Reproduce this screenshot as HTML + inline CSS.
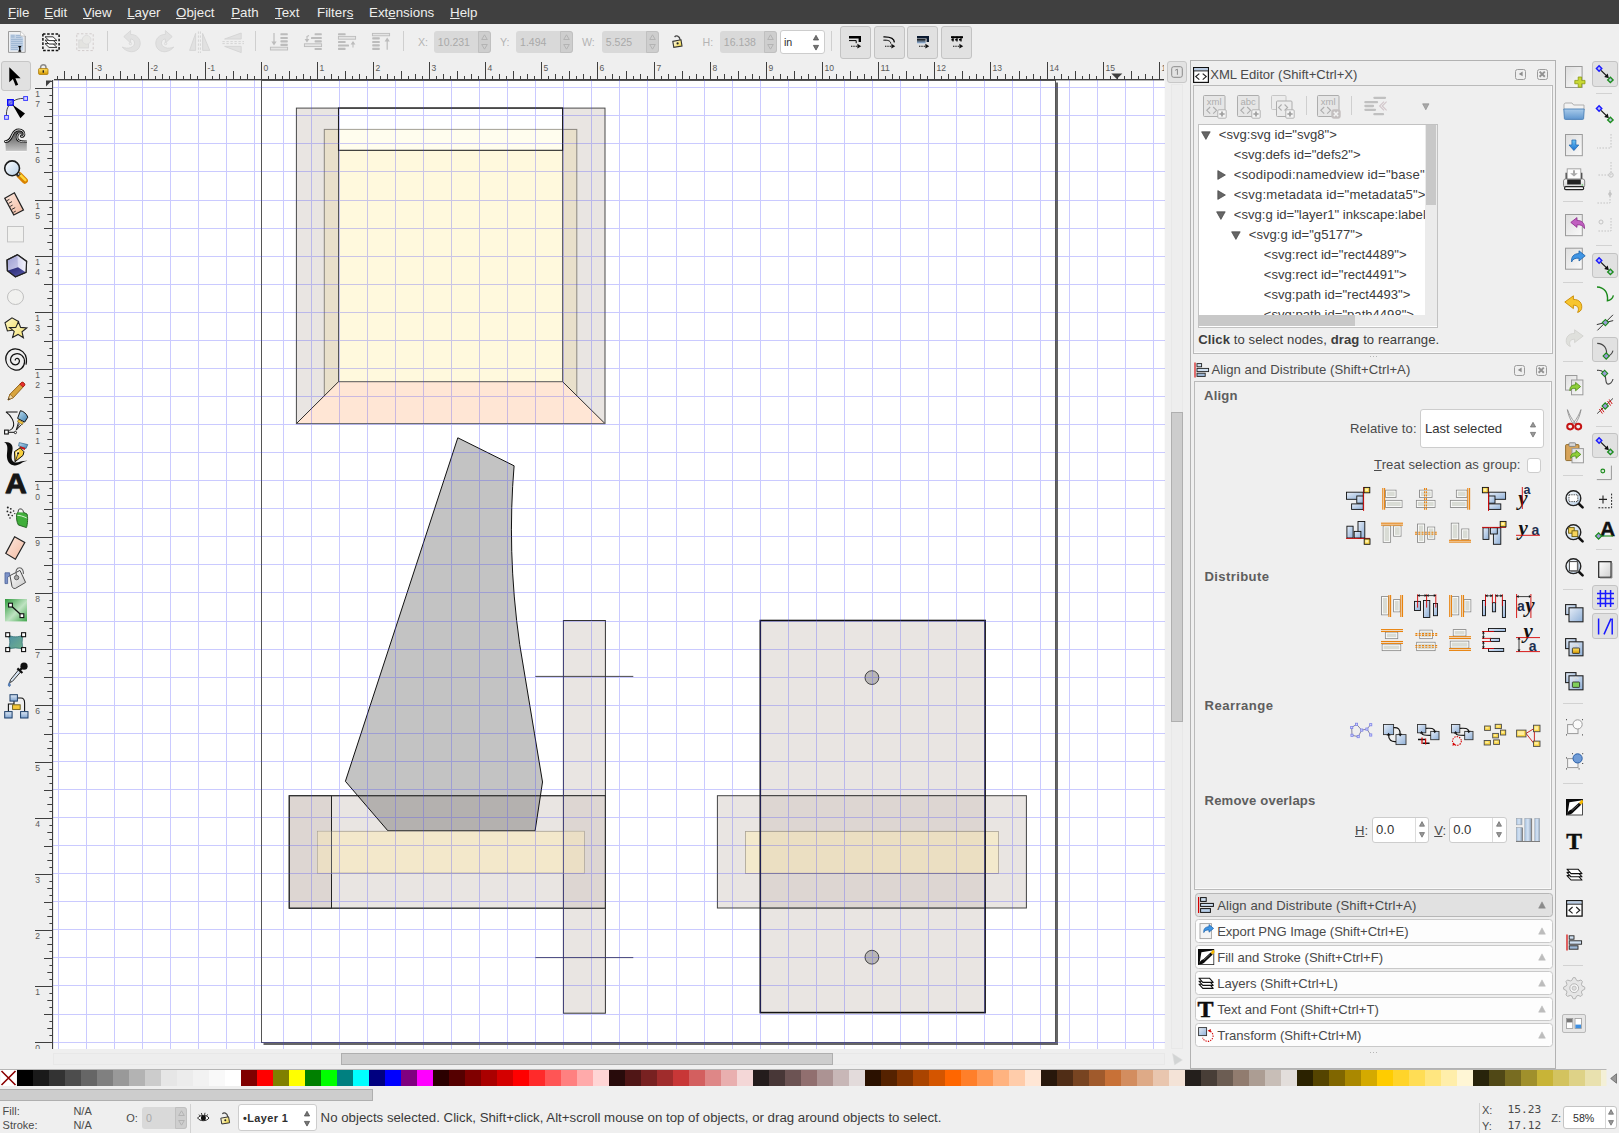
<!DOCTYPE html>
<html lang="en"><head><meta charset="utf-8"><title>Inkscape</title>
<style>
html,body{margin:0;padding:0;}
body{width:1619px;height:1133px;overflow:hidden;background:#efefef;font-family:"Liberation Sans",sans-serif;font-size:13.1px;color:#3a3a3a;}
#root{position:relative;width:1619px;height:1133px;overflow:hidden;background:#efefef;}
#root div,#root svg{position:absolute;box-sizing:border-box;}
#root svg{overflow:visible;}
.t{white-space:nowrap;line-height:16px;height:16px;}
.b{font-weight:bold;}
u{text-decoration:underline;text-underline-offset:1px;}
</style></head>
<body><div id="root">
<div style="left:0px;top:0px;width:1619px;height:24px;background:#404040;"></div>
<div class="t" style="left:8px;top:4.7px;color:#eeeeec;font-size:13.33px;"><u>F</u>ile</div>
<div class="t" style="left:44.3px;top:4.7px;color:#eeeeec;font-size:13.33px;"><u>E</u>dit</div>
<div class="t" style="left:83px;top:4.7px;color:#eeeeec;font-size:13.33px;"><u>V</u>iew</div>
<div class="t" style="left:127.2px;top:4.7px;color:#eeeeec;font-size:13.33px;"><u>L</u>ayer</div>
<div class="t" style="left:176px;top:4.7px;color:#eeeeec;font-size:13.33px;"><u>O</u>bject</div>
<div class="t" style="left:231.2px;top:4.7px;color:#eeeeec;font-size:13.33px;"><u>P</u>ath</div>
<div class="t" style="left:275px;top:4.7px;color:#eeeeec;font-size:13.33px;"><u>T</u>ext</div>
<div class="t" style="left:317px;top:4.7px;color:#eeeeec;font-size:13.33px;">Filter<u>s</u></div>
<div class="t" style="left:369px;top:4.7px;color:#eeeeec;font-size:13.33px;">Ext<u>e</u>nsions</div>
<div class="t" style="left:450px;top:4.7px;color:#eeeeec;font-size:13.33px;"><u>H</u>elp</div>
<div style="left:107px;top:31px;width:1px;height:20px;background:#cfcfcf;"></div>
<div style="left:255px;top:31px;width:1px;height:20px;background:#cfcfcf;"></div>
<div style="left:403px;top:31px;width:1px;height:20px;background:#cfcfcf;"></div>
<div style="left:831px;top:31px;width:1px;height:20px;background:#cfcfcf;"></div>
<div class="t" style="left:418px;top:34px;color:#b4b4b4;font-size:10.67px;">X:</div>
<div style="left:434px;top:31px;width:56.5px;height:21.5px;background:#d9d9d9;border-radius:3px;"></div>
<div style="left:478.0px;top:30.5px;width:12.5px;height:22.5px;background:#cecece;border:1px solid #c0c0c0;border-radius:0 3px 3px 0;"></div>
<svg style="left:481.0px;top:34px;" width="7" height="16" viewBox="0 0 7 16"><path d="M0.7 5.5 L3.5 0.8 L6.3 5.5 Z M0.7 10.5 L3.5 15.2 L6.3 10.5 Z" fill="none" stroke="#b0b0b0" stroke-width="0.9"/></svg>
<div class="t" style="left:437.8px;top:34px;color:#a9a9a9;font-size:10.5px;">10.231</div>
<div class="t" style="left:500px;top:34px;color:#b4b4b4;font-size:10.67px;">Y:</div>
<div style="left:516.3px;top:31px;width:56.5px;height:21.5px;background:#d9d9d9;border-radius:3px;"></div>
<div style="left:560.3px;top:30.5px;width:12.5px;height:22.5px;background:#cecece;border:1px solid #c0c0c0;border-radius:0 3px 3px 0;"></div>
<svg style="left:563.3px;top:34px;" width="7" height="16" viewBox="0 0 7 16"><path d="M0.7 5.5 L3.5 0.8 L6.3 5.5 Z M0.7 10.5 L3.5 15.2 L6.3 10.5 Z" fill="none" stroke="#b0b0b0" stroke-width="0.9"/></svg>
<div class="t" style="left:520.0999999999999px;top:34px;color:#a9a9a9;font-size:10.5px;">1.494</div>
<div class="t" style="left:582px;top:34px;color:#b4b4b4;font-size:10.67px;">W:</div>
<div style="left:602px;top:31px;width:56.5px;height:21.5px;background:#d9d9d9;border-radius:3px;"></div>
<div style="left:646.0px;top:30.5px;width:12.5px;height:22.5px;background:#cecece;border:1px solid #c0c0c0;border-radius:0 3px 3px 0;"></div>
<svg style="left:649.0px;top:34px;" width="7" height="16" viewBox="0 0 7 16"><path d="M0.7 5.5 L3.5 0.8 L6.3 5.5 Z M0.7 10.5 L3.5 15.2 L6.3 10.5 Z" fill="none" stroke="#b0b0b0" stroke-width="0.9"/></svg>
<div class="t" style="left:605.8px;top:34px;color:#a9a9a9;font-size:10.5px;">5.525</div>
<div class="t" style="left:702.5px;top:34px;color:#b4b4b4;font-size:10.67px;">H:</div>
<div style="left:720px;top:31px;width:56.5px;height:21.5px;background:#d9d9d9;border-radius:3px;"></div>
<div style="left:764.0px;top:30.5px;width:12.5px;height:22.5px;background:#cecece;border:1px solid #c0c0c0;border-radius:0 3px 3px 0;"></div>
<svg style="left:767.0px;top:34px;" width="7" height="16" viewBox="0 0 7 16"><path d="M0.7 5.5 L3.5 0.8 L6.3 5.5 Z M0.7 10.5 L3.5 15.2 L6.3 10.5 Z" fill="none" stroke="#b0b0b0" stroke-width="0.9"/></svg>
<div class="t" style="left:723.8px;top:34px;color:#a9a9a9;font-size:10.5px;">16.138</div>
<div style="left:780px;top:29.5px;width:44.5px;height:24px;background:#fff;border:1px solid #cdcdcd;border-radius:3px;"></div>
<div class="t" style="left:784px;top:34px;color:#2e2e2e;font-size:10.67px;">in</div>
<svg style="left:812.6px;top:35px;" width="6" height="15.4" viewBox="0 0 6 15.4"><path d="M0.4 5 L3 0.3 L5.6 5 Z M0.4 10.4 L3 15.1 L5.6 10.4 Z" fill="#777" stroke="#444" stroke-width="0.7"/></svg>
<div style="left:839.5px;top:25.5px;width:31px;height:33px;background:#e1e1e1;border:1px solid #c3c3c3;border-radius:3px;"></div>
<div style="left:873.5px;top:25.5px;width:31px;height:33px;background:#e1e1e1;border:1px solid #c3c3c3;border-radius:3px;"></div>
<div style="left:907.3px;top:25.5px;width:31px;height:33px;background:#e1e1e1;border:1px solid #c3c3c3;border-radius:3px;"></div>
<div style="left:941.3px;top:25.5px;width:31px;height:33px;background:#e1e1e1;border:1px solid #c3c3c3;border-radius:3px;"></div>
<svg style="left:54px;top:62px;overflow:hidden" width="1110" height="19" viewBox="0 0 1110 19" font-family="Liberation Sans, sans-serif"><rect x="3" y="14" width="1" height="3" fill="#3e3e3e"/><rect x="10" y="9" width="1" height="8" fill="#3e3e3e"/><rect x="17" y="14" width="1" height="3" fill="#3e3e3e"/><rect x="24" y="12" width="1" height="5" fill="#3e3e3e"/><rect x="31" y="14" width="1" height="3" fill="#3e3e3e"/><rect x="38" y="0" width="1" height="17" fill="#3e3e3e"/><rect x="45" y="14" width="1" height="3" fill="#3e3e3e"/><rect x="52" y="12" width="1" height="5" fill="#3e3e3e"/><rect x="59" y="14" width="1" height="3" fill="#3e3e3e"/><rect x="66" y="9" width="1" height="8" fill="#3e3e3e"/><rect x="73" y="14" width="1" height="3" fill="#3e3e3e"/><rect x="80" y="12" width="1" height="5" fill="#3e3e3e"/><rect x="87" y="14" width="1" height="3" fill="#3e3e3e"/><rect x="94" y="0" width="1" height="17" fill="#3e3e3e"/><rect x="101" y="14" width="1" height="3" fill="#3e3e3e"/><rect x="108" y="12" width="1" height="5" fill="#3e3e3e"/><rect x="115" y="14" width="1" height="3" fill="#3e3e3e"/><rect x="122" y="9" width="1" height="8" fill="#3e3e3e"/><rect x="129" y="14" width="1" height="3" fill="#3e3e3e"/><rect x="136" y="12" width="1" height="5" fill="#3e3e3e"/><rect x="143" y="14" width="1" height="3" fill="#3e3e3e"/><rect x="151" y="0" width="1" height="17" fill="#3e3e3e"/><rect x="158" y="14" width="1" height="3" fill="#3e3e3e"/><rect x="165" y="12" width="1" height="5" fill="#3e3e3e"/><rect x="172" y="14" width="1" height="3" fill="#3e3e3e"/><rect x="179" y="9" width="1" height="8" fill="#3e3e3e"/><rect x="186" y="14" width="1" height="3" fill="#3e3e3e"/><rect x="193" y="12" width="1" height="5" fill="#3e3e3e"/><rect x="200" y="14" width="1" height="3" fill="#3e3e3e"/><rect x="207" y="0" width="1" height="17" fill="#3e3e3e"/><rect x="214" y="14" width="1" height="3" fill="#3e3e3e"/><rect x="221" y="12" width="1" height="5" fill="#3e3e3e"/><rect x="228" y="14" width="1" height="3" fill="#3e3e3e"/><rect x="235" y="9" width="1" height="8" fill="#3e3e3e"/><rect x="242" y="14" width="1" height="3" fill="#3e3e3e"/><rect x="249" y="12" width="1" height="5" fill="#3e3e3e"/><rect x="256" y="14" width="1" height="3" fill="#3e3e3e"/><rect x="263" y="0" width="1" height="17" fill="#3e3e3e"/><rect x="270" y="14" width="1" height="3" fill="#3e3e3e"/><rect x="277" y="12" width="1" height="5" fill="#3e3e3e"/><rect x="284" y="14" width="1" height="3" fill="#3e3e3e"/><rect x="291" y="9" width="1" height="8" fill="#3e3e3e"/><rect x="298" y="14" width="1" height="3" fill="#3e3e3e"/><rect x="305" y="12" width="1" height="5" fill="#3e3e3e"/><rect x="312" y="14" width="1" height="3" fill="#3e3e3e"/><rect x="319" y="0" width="1" height="17" fill="#3e3e3e"/><rect x="326" y="14" width="1" height="3" fill="#3e3e3e"/><rect x="333" y="12" width="1" height="5" fill="#3e3e3e"/><rect x="340" y="14" width="1" height="3" fill="#3e3e3e"/><rect x="347" y="9" width="1" height="8" fill="#3e3e3e"/><rect x="354" y="14" width="1" height="3" fill="#3e3e3e"/><rect x="361" y="12" width="1" height="5" fill="#3e3e3e"/><rect x="368" y="14" width="1" height="3" fill="#3e3e3e"/><rect x="375" y="0" width="1" height="17" fill="#3e3e3e"/><rect x="382" y="14" width="1" height="3" fill="#3e3e3e"/><rect x="389" y="12" width="1" height="5" fill="#3e3e3e"/><rect x="396" y="14" width="1" height="3" fill="#3e3e3e"/><rect x="403" y="9" width="1" height="8" fill="#3e3e3e"/><rect x="410" y="14" width="1" height="3" fill="#3e3e3e"/><rect x="417" y="12" width="1" height="5" fill="#3e3e3e"/><rect x="424" y="14" width="1" height="3" fill="#3e3e3e"/><rect x="431" y="0" width="1" height="17" fill="#3e3e3e"/><rect x="438" y="14" width="1" height="3" fill="#3e3e3e"/><rect x="445" y="12" width="1" height="5" fill="#3e3e3e"/><rect x="452" y="14" width="1" height="3" fill="#3e3e3e"/><rect x="459" y="9" width="1" height="8" fill="#3e3e3e"/><rect x="466" y="14" width="1" height="3" fill="#3e3e3e"/><rect x="473" y="12" width="1" height="5" fill="#3e3e3e"/><rect x="480" y="14" width="1" height="3" fill="#3e3e3e"/><rect x="487" y="0" width="1" height="17" fill="#3e3e3e"/><rect x="494" y="14" width="1" height="3" fill="#3e3e3e"/><rect x="501" y="12" width="1" height="5" fill="#3e3e3e"/><rect x="508" y="14" width="1" height="3" fill="#3e3e3e"/><rect x="515" y="9" width="1" height="8" fill="#3e3e3e"/><rect x="522" y="14" width="1" height="3" fill="#3e3e3e"/><rect x="529" y="12" width="1" height="5" fill="#3e3e3e"/><rect x="536" y="14" width="1" height="3" fill="#3e3e3e"/><rect x="543" y="0" width="1" height="17" fill="#3e3e3e"/><rect x="551" y="14" width="1" height="3" fill="#3e3e3e"/><rect x="558" y="12" width="1" height="5" fill="#3e3e3e"/><rect x="565" y="14" width="1" height="3" fill="#3e3e3e"/><rect x="572" y="9" width="1" height="8" fill="#3e3e3e"/><rect x="579" y="14" width="1" height="3" fill="#3e3e3e"/><rect x="586" y="12" width="1" height="5" fill="#3e3e3e"/><rect x="593" y="14" width="1" height="3" fill="#3e3e3e"/><rect x="600" y="0" width="1" height="17" fill="#3e3e3e"/><rect x="607" y="14" width="1" height="3" fill="#3e3e3e"/><rect x="614" y="12" width="1" height="5" fill="#3e3e3e"/><rect x="621" y="14" width="1" height="3" fill="#3e3e3e"/><rect x="628" y="9" width="1" height="8" fill="#3e3e3e"/><rect x="635" y="14" width="1" height="3" fill="#3e3e3e"/><rect x="642" y="12" width="1" height="5" fill="#3e3e3e"/><rect x="649" y="14" width="1" height="3" fill="#3e3e3e"/><rect x="656" y="0" width="1" height="17" fill="#3e3e3e"/><rect x="663" y="14" width="1" height="3" fill="#3e3e3e"/><rect x="670" y="12" width="1" height="5" fill="#3e3e3e"/><rect x="677" y="14" width="1" height="3" fill="#3e3e3e"/><rect x="684" y="9" width="1" height="8" fill="#3e3e3e"/><rect x="691" y="14" width="1" height="3" fill="#3e3e3e"/><rect x="698" y="12" width="1" height="5" fill="#3e3e3e"/><rect x="705" y="14" width="1" height="3" fill="#3e3e3e"/><rect x="712" y="0" width="1" height="17" fill="#3e3e3e"/><rect x="719" y="14" width="1" height="3" fill="#3e3e3e"/><rect x="726" y="12" width="1" height="5" fill="#3e3e3e"/><rect x="733" y="14" width="1" height="3" fill="#3e3e3e"/><rect x="740" y="9" width="1" height="8" fill="#3e3e3e"/><rect x="747" y="14" width="1" height="3" fill="#3e3e3e"/><rect x="754" y="12" width="1" height="5" fill="#3e3e3e"/><rect x="761" y="14" width="1" height="3" fill="#3e3e3e"/><rect x="768" y="0" width="1" height="17" fill="#3e3e3e"/><rect x="775" y="14" width="1" height="3" fill="#3e3e3e"/><rect x="782" y="12" width="1" height="5" fill="#3e3e3e"/><rect x="789" y="14" width="1" height="3" fill="#3e3e3e"/><rect x="796" y="9" width="1" height="8" fill="#3e3e3e"/><rect x="803" y="14" width="1" height="3" fill="#3e3e3e"/><rect x="810" y="12" width="1" height="5" fill="#3e3e3e"/><rect x="817" y="14" width="1" height="3" fill="#3e3e3e"/><rect x="824" y="0" width="1" height="17" fill="#3e3e3e"/><rect x="831" y="14" width="1" height="3" fill="#3e3e3e"/><rect x="838" y="12" width="1" height="5" fill="#3e3e3e"/><rect x="845" y="14" width="1" height="3" fill="#3e3e3e"/><rect x="852" y="9" width="1" height="8" fill="#3e3e3e"/><rect x="859" y="14" width="1" height="3" fill="#3e3e3e"/><rect x="866" y="12" width="1" height="5" fill="#3e3e3e"/><rect x="873" y="14" width="1" height="3" fill="#3e3e3e"/><rect x="880" y="0" width="1" height="17" fill="#3e3e3e"/><rect x="887" y="14" width="1" height="3" fill="#3e3e3e"/><rect x="894" y="12" width="1" height="5" fill="#3e3e3e"/><rect x="901" y="14" width="1" height="3" fill="#3e3e3e"/><rect x="908" y="9" width="1" height="8" fill="#3e3e3e"/><rect x="915" y="14" width="1" height="3" fill="#3e3e3e"/><rect x="922" y="12" width="1" height="5" fill="#3e3e3e"/><rect x="929" y="14" width="1" height="3" fill="#3e3e3e"/><rect x="936" y="0" width="1" height="17" fill="#3e3e3e"/><rect x="943" y="14" width="1" height="3" fill="#3e3e3e"/><rect x="951" y="12" width="1" height="5" fill="#3e3e3e"/><rect x="958" y="14" width="1" height="3" fill="#3e3e3e"/><rect x="965" y="9" width="1" height="8" fill="#3e3e3e"/><rect x="972" y="14" width="1" height="3" fill="#3e3e3e"/><rect x="979" y="12" width="1" height="5" fill="#3e3e3e"/><rect x="986" y="14" width="1" height="3" fill="#3e3e3e"/><rect x="993" y="0" width="1" height="17" fill="#3e3e3e"/><rect x="1000" y="14" width="1" height="3" fill="#3e3e3e"/><rect x="1007" y="12" width="1" height="5" fill="#3e3e3e"/><rect x="1014" y="14" width="1" height="3" fill="#3e3e3e"/><rect x="1021" y="9" width="1" height="8" fill="#3e3e3e"/><rect x="1028" y="14" width="1" height="3" fill="#3e3e3e"/><rect x="1035" y="12" width="1" height="5" fill="#3e3e3e"/><rect x="1042" y="14" width="1" height="3" fill="#3e3e3e"/><rect x="1049" y="0" width="1" height="17" fill="#3e3e3e"/><rect x="1056" y="14" width="1" height="3" fill="#3e3e3e"/><rect x="1063" y="12" width="1" height="5" fill="#3e3e3e"/><rect x="1070" y="14" width="1" height="3" fill="#3e3e3e"/><rect x="1077" y="9" width="1" height="8" fill="#3e3e3e"/><rect x="1084" y="14" width="1" height="3" fill="#3e3e3e"/><rect x="1091" y="12" width="1" height="5" fill="#3e3e3e"/><rect x="1098" y="14" width="1" height="3" fill="#3e3e3e"/><rect x="1105" y="0" width="1" height="17" fill="#3e3e3e"/><rect x="0" y="17" width="1110" height="1.6" fill="#3e3e3e"/><text x="40.40" y="9.2" font-size="9.9" textLength="7.65" lengthAdjust="spacingAndGlyphs" fill="#5a5a5a">-3</text><text x="96.40" y="9.2" font-size="9.9" textLength="7.65" lengthAdjust="spacingAndGlyphs" fill="#5a5a5a">-2</text><text x="153.40" y="9.2" font-size="9.9" textLength="7.65" lengthAdjust="spacingAndGlyphs" fill="#5a5a5a">-1</text><text x="209.40" y="9.2" font-size="9.9" textLength="4.75" lengthAdjust="spacingAndGlyphs" fill="#5a5a5a">0</text><text x="265.40" y="9.2" font-size="9.9" textLength="4.75" lengthAdjust="spacingAndGlyphs" fill="#5a5a5a">1</text><text x="321.40" y="9.2" font-size="9.9" textLength="4.75" lengthAdjust="spacingAndGlyphs" fill="#5a5a5a">2</text><text x="377.40" y="9.2" font-size="9.9" textLength="4.75" lengthAdjust="spacingAndGlyphs" fill="#5a5a5a">3</text><text x="433.40" y="9.2" font-size="9.9" textLength="4.75" lengthAdjust="spacingAndGlyphs" fill="#5a5a5a">4</text><text x="489.40" y="9.2" font-size="9.9" textLength="4.75" lengthAdjust="spacingAndGlyphs" fill="#5a5a5a">5</text><text x="545.40" y="9.2" font-size="9.9" textLength="4.75" lengthAdjust="spacingAndGlyphs" fill="#5a5a5a">6</text><text x="602.40" y="9.2" font-size="9.9" textLength="4.75" lengthAdjust="spacingAndGlyphs" fill="#5a5a5a">7</text><text x="658.40" y="9.2" font-size="9.9" textLength="4.75" lengthAdjust="spacingAndGlyphs" fill="#5a5a5a">8</text><text x="714.40" y="9.2" font-size="9.9" textLength="4.75" lengthAdjust="spacingAndGlyphs" fill="#5a5a5a">9</text><text x="770.40" y="9.2" font-size="9.9" textLength="9.50" lengthAdjust="spacingAndGlyphs" fill="#5a5a5a">10</text><text x="826.40" y="9.2" font-size="9.9" textLength="9.50" lengthAdjust="spacingAndGlyphs" fill="#5a5a5a">11</text><text x="882.40" y="9.2" font-size="9.9" textLength="9.50" lengthAdjust="spacingAndGlyphs" fill="#5a5a5a">12</text><text x="938.40" y="9.2" font-size="9.9" textLength="9.50" lengthAdjust="spacingAndGlyphs" fill="#5a5a5a">13</text><text x="995.40" y="9.2" font-size="9.9" textLength="9.50" lengthAdjust="spacingAndGlyphs" fill="#5a5a5a">14</text><text x="1051.40" y="9.2" font-size="9.9" textLength="9.50" lengthAdjust="spacingAndGlyphs" fill="#5a5a5a">15</text><text x="1107.40" y="9.2" font-size="9.9" textLength="9.50" lengthAdjust="spacingAndGlyphs" fill="#5a5a5a">16</text><path d="M1057.3 73.4 L1068.3 73.4 L1062.8 79 Z" transform="translate(0,-62)" fill="#3e3e3e"/></svg>
<svg style="left:34px;top:80px;overflow:hidden" width="20" height="969" viewBox="0 0 20 969" font-family="Liberation Sans, sans-serif"><rect x="15.40" y="1" width="2.60" height="1" fill="#3e3e3e"/><rect x="1.00" y="8" width="17.00" height="1" fill="#3e3e3e"/><rect x="15.40" y="15" width="2.60" height="1" fill="#3e3e3e"/><rect x="13.30" y="22" width="4.70" height="1" fill="#3e3e3e"/><rect x="15.40" y="29" width="2.60" height="1" fill="#3e3e3e"/><rect x="10.00" y="36" width="8.00" height="1" fill="#3e3e3e"/><rect x="15.40" y="43" width="2.60" height="1" fill="#3e3e3e"/><rect x="13.30" y="50" width="4.70" height="1" fill="#3e3e3e"/><rect x="15.40" y="57" width="2.60" height="1" fill="#3e3e3e"/><rect x="1.00" y="64" width="17.00" height="1" fill="#3e3e3e"/><rect x="15.40" y="71" width="2.60" height="1" fill="#3e3e3e"/><rect x="13.30" y="78" width="4.70" height="1" fill="#3e3e3e"/><rect x="15.40" y="85" width="2.60" height="1" fill="#3e3e3e"/><rect x="10.00" y="92" width="8.00" height="1" fill="#3e3e3e"/><rect x="15.40" y="99" width="2.60" height="1" fill="#3e3e3e"/><rect x="13.30" y="106" width="4.70" height="1" fill="#3e3e3e"/><rect x="15.40" y="113" width="2.60" height="1" fill="#3e3e3e"/><rect x="1.00" y="120" width="17.00" height="1" fill="#3e3e3e"/><rect x="15.40" y="127" width="2.60" height="1" fill="#3e3e3e"/><rect x="13.30" y="134" width="4.70" height="1" fill="#3e3e3e"/><rect x="15.40" y="141" width="2.60" height="1" fill="#3e3e3e"/><rect x="10.00" y="148" width="8.00" height="1" fill="#3e3e3e"/><rect x="15.40" y="155" width="2.60" height="1" fill="#3e3e3e"/><rect x="13.30" y="162" width="4.70" height="1" fill="#3e3e3e"/><rect x="15.40" y="169" width="2.60" height="1" fill="#3e3e3e"/><rect x="1.00" y="176" width="17.00" height="1" fill="#3e3e3e"/><rect x="15.40" y="183" width="2.60" height="1" fill="#3e3e3e"/><rect x="13.30" y="190" width="4.70" height="1" fill="#3e3e3e"/><rect x="15.40" y="197" width="2.60" height="1" fill="#3e3e3e"/><rect x="10.00" y="204" width="8.00" height="1" fill="#3e3e3e"/><rect x="15.40" y="211" width="2.60" height="1" fill="#3e3e3e"/><rect x="13.30" y="218" width="4.70" height="1" fill="#3e3e3e"/><rect x="15.40" y="225" width="2.60" height="1" fill="#3e3e3e"/><rect x="1.00" y="232" width="17.00" height="1" fill="#3e3e3e"/><rect x="15.40" y="239" width="2.60" height="1" fill="#3e3e3e"/><rect x="13.30" y="246" width="4.70" height="1" fill="#3e3e3e"/><rect x="15.40" y="254" width="2.60" height="1" fill="#3e3e3e"/><rect x="10.00" y="261" width="8.00" height="1" fill="#3e3e3e"/><rect x="15.40" y="268" width="2.60" height="1" fill="#3e3e3e"/><rect x="13.30" y="275" width="4.70" height="1" fill="#3e3e3e"/><rect x="15.40" y="282" width="2.60" height="1" fill="#3e3e3e"/><rect x="1.00" y="289" width="17.00" height="1" fill="#3e3e3e"/><rect x="15.40" y="296" width="2.60" height="1" fill="#3e3e3e"/><rect x="13.30" y="303" width="4.70" height="1" fill="#3e3e3e"/><rect x="15.40" y="310" width="2.60" height="1" fill="#3e3e3e"/><rect x="10.00" y="317" width="8.00" height="1" fill="#3e3e3e"/><rect x="15.40" y="324" width="2.60" height="1" fill="#3e3e3e"/><rect x="13.30" y="331" width="4.70" height="1" fill="#3e3e3e"/><rect x="15.40" y="338" width="2.60" height="1" fill="#3e3e3e"/><rect x="1.00" y="345" width="17.00" height="1" fill="#3e3e3e"/><rect x="15.40" y="352" width="2.60" height="1" fill="#3e3e3e"/><rect x="13.30" y="359" width="4.70" height="1" fill="#3e3e3e"/><rect x="15.40" y="366" width="2.60" height="1" fill="#3e3e3e"/><rect x="10.00" y="373" width="8.00" height="1" fill="#3e3e3e"/><rect x="15.40" y="380" width="2.60" height="1" fill="#3e3e3e"/><rect x="13.30" y="387" width="4.70" height="1" fill="#3e3e3e"/><rect x="15.40" y="394" width="2.60" height="1" fill="#3e3e3e"/><rect x="1.00" y="401" width="17.00" height="1" fill="#3e3e3e"/><rect x="15.40" y="408" width="2.60" height="1" fill="#3e3e3e"/><rect x="13.30" y="415" width="4.70" height="1" fill="#3e3e3e"/><rect x="15.40" y="422" width="2.60" height="1" fill="#3e3e3e"/><rect x="10.00" y="429" width="8.00" height="1" fill="#3e3e3e"/><rect x="15.40" y="436" width="2.60" height="1" fill="#3e3e3e"/><rect x="13.30" y="443" width="4.70" height="1" fill="#3e3e3e"/><rect x="15.40" y="450" width="2.60" height="1" fill="#3e3e3e"/><rect x="1.00" y="457" width="17.00" height="1" fill="#3e3e3e"/><rect x="15.40" y="464" width="2.60" height="1" fill="#3e3e3e"/><rect x="13.30" y="471" width="4.70" height="1" fill="#3e3e3e"/><rect x="15.40" y="478" width="2.60" height="1" fill="#3e3e3e"/><rect x="10.00" y="485" width="8.00" height="1" fill="#3e3e3e"/><rect x="15.40" y="492" width="2.60" height="1" fill="#3e3e3e"/><rect x="13.30" y="499" width="4.70" height="1" fill="#3e3e3e"/><rect x="15.40" y="506" width="2.60" height="1" fill="#3e3e3e"/><rect x="1.00" y="513" width="17.00" height="1" fill="#3e3e3e"/><rect x="15.40" y="520" width="2.60" height="1" fill="#3e3e3e"/><rect x="13.30" y="527" width="4.70" height="1" fill="#3e3e3e"/><rect x="15.40" y="534" width="2.60" height="1" fill="#3e3e3e"/><rect x="10.00" y="541" width="8.00" height="1" fill="#3e3e3e"/><rect x="15.40" y="548" width="2.60" height="1" fill="#3e3e3e"/><rect x="13.30" y="555" width="4.70" height="1" fill="#3e3e3e"/><rect x="15.40" y="562" width="2.60" height="1" fill="#3e3e3e"/><rect x="1.00" y="569" width="17.00" height="1" fill="#3e3e3e"/><rect x="15.40" y="576" width="2.60" height="1" fill="#3e3e3e"/><rect x="13.30" y="583" width="4.70" height="1" fill="#3e3e3e"/><rect x="15.40" y="590" width="2.60" height="1" fill="#3e3e3e"/><rect x="10.00" y="597" width="8.00" height="1" fill="#3e3e3e"/><rect x="15.40" y="604" width="2.60" height="1" fill="#3e3e3e"/><rect x="13.30" y="611" width="4.70" height="1" fill="#3e3e3e"/><rect x="15.40" y="618" width="2.60" height="1" fill="#3e3e3e"/><rect x="1.00" y="625" width="17.00" height="1" fill="#3e3e3e"/><rect x="15.40" y="632" width="2.60" height="1" fill="#3e3e3e"/><rect x="13.30" y="639" width="4.70" height="1" fill="#3e3e3e"/><rect x="15.40" y="646" width="2.60" height="1" fill="#3e3e3e"/><rect x="10.00" y="654" width="8.00" height="1" fill="#3e3e3e"/><rect x="15.40" y="661" width="2.60" height="1" fill="#3e3e3e"/><rect x="13.30" y="668" width="4.70" height="1" fill="#3e3e3e"/><rect x="15.40" y="675" width="2.60" height="1" fill="#3e3e3e"/><rect x="1.00" y="682" width="17.00" height="1" fill="#3e3e3e"/><rect x="15.40" y="689" width="2.60" height="1" fill="#3e3e3e"/><rect x="13.30" y="696" width="4.70" height="1" fill="#3e3e3e"/><rect x="15.40" y="703" width="2.60" height="1" fill="#3e3e3e"/><rect x="10.00" y="710" width="8.00" height="1" fill="#3e3e3e"/><rect x="15.40" y="717" width="2.60" height="1" fill="#3e3e3e"/><rect x="13.30" y="724" width="4.70" height="1" fill="#3e3e3e"/><rect x="15.40" y="731" width="2.60" height="1" fill="#3e3e3e"/><rect x="1.00" y="738" width="17.00" height="1" fill="#3e3e3e"/><rect x="15.40" y="745" width="2.60" height="1" fill="#3e3e3e"/><rect x="13.30" y="752" width="4.70" height="1" fill="#3e3e3e"/><rect x="15.40" y="759" width="2.60" height="1" fill="#3e3e3e"/><rect x="10.00" y="766" width="8.00" height="1" fill="#3e3e3e"/><rect x="15.40" y="773" width="2.60" height="1" fill="#3e3e3e"/><rect x="13.30" y="780" width="4.70" height="1" fill="#3e3e3e"/><rect x="15.40" y="787" width="2.60" height="1" fill="#3e3e3e"/><rect x="1.00" y="794" width="17.00" height="1" fill="#3e3e3e"/><rect x="15.40" y="801" width="2.60" height="1" fill="#3e3e3e"/><rect x="13.30" y="808" width="4.70" height="1" fill="#3e3e3e"/><rect x="15.40" y="815" width="2.60" height="1" fill="#3e3e3e"/><rect x="10.00" y="822" width="8.00" height="1" fill="#3e3e3e"/><rect x="15.40" y="829" width="2.60" height="1" fill="#3e3e3e"/><rect x="13.30" y="836" width="4.70" height="1" fill="#3e3e3e"/><rect x="15.40" y="843" width="2.60" height="1" fill="#3e3e3e"/><rect x="1.00" y="850" width="17.00" height="1" fill="#3e3e3e"/><rect x="15.40" y="857" width="2.60" height="1" fill="#3e3e3e"/><rect x="13.30" y="864" width="4.70" height="1" fill="#3e3e3e"/><rect x="15.40" y="871" width="2.60" height="1" fill="#3e3e3e"/><rect x="10.00" y="878" width="8.00" height="1" fill="#3e3e3e"/><rect x="15.40" y="885" width="2.60" height="1" fill="#3e3e3e"/><rect x="13.30" y="892" width="4.70" height="1" fill="#3e3e3e"/><rect x="15.40" y="899" width="2.60" height="1" fill="#3e3e3e"/><rect x="1.00" y="906" width="17.00" height="1" fill="#3e3e3e"/><rect x="15.40" y="913" width="2.60" height="1" fill="#3e3e3e"/><rect x="13.30" y="920" width="4.70" height="1" fill="#3e3e3e"/><rect x="15.40" y="927" width="2.60" height="1" fill="#3e3e3e"/><rect x="10.00" y="934" width="8.00" height="1" fill="#3e3e3e"/><rect x="15.40" y="941" width="2.60" height="1" fill="#3e3e3e"/><rect x="13.30" y="948" width="4.70" height="1" fill="#3e3e3e"/><rect x="15.40" y="955" width="2.60" height="1" fill="#3e3e3e"/><rect x="1.00" y="962" width="17.00" height="1" fill="#3e3e3e"/><rect x="18" y="0" width="1.3" height="969" fill="#3e3e3e"/><text x="1.2" y="971.00" font-size="9.9" textLength="4.75" lengthAdjust="spacingAndGlyphs" fill="#5a5a5a">0</text><text x="1.2" y="915.00" font-size="9.9" textLength="4.75" lengthAdjust="spacingAndGlyphs" fill="#5a5a5a">1</text><text x="1.2" y="859.00" font-size="9.9" textLength="4.75" lengthAdjust="spacingAndGlyphs" fill="#5a5a5a">2</text><text x="1.2" y="803.00" font-size="9.9" textLength="4.75" lengthAdjust="spacingAndGlyphs" fill="#5a5a5a">3</text><text x="1.2" y="747.00" font-size="9.9" textLength="4.75" lengthAdjust="spacingAndGlyphs" fill="#5a5a5a">4</text><text x="1.2" y="691.00" font-size="9.9" textLength="4.75" lengthAdjust="spacingAndGlyphs" fill="#5a5a5a">5</text><text x="1.2" y="634.00" font-size="9.9" textLength="4.75" lengthAdjust="spacingAndGlyphs" fill="#5a5a5a">6</text><text x="1.2" y="578.00" font-size="9.9" textLength="4.75" lengthAdjust="spacingAndGlyphs" fill="#5a5a5a">7</text><text x="1.2" y="522.00" font-size="9.9" textLength="4.75" lengthAdjust="spacingAndGlyphs" fill="#5a5a5a">8</text><text x="1.2" y="466.00" font-size="9.9" textLength="4.75" lengthAdjust="spacingAndGlyphs" fill="#5a5a5a">9</text><text x="1.2" y="410.00" font-size="9.9" textLength="4.75" lengthAdjust="spacingAndGlyphs" fill="#5a5a5a">1</text><text x="1.2" y="419.80" font-size="9.9" textLength="4.75" lengthAdjust="spacingAndGlyphs" fill="#5a5a5a">0</text><text x="1.2" y="354.00" font-size="9.9" textLength="4.75" lengthAdjust="spacingAndGlyphs" fill="#5a5a5a">1</text><text x="1.2" y="363.80" font-size="9.9" textLength="4.75" lengthAdjust="spacingAndGlyphs" fill="#5a5a5a">1</text><text x="1.2" y="298.00" font-size="9.9" textLength="4.75" lengthAdjust="spacingAndGlyphs" fill="#5a5a5a">1</text><text x="1.2" y="307.80" font-size="9.9" textLength="4.75" lengthAdjust="spacingAndGlyphs" fill="#5a5a5a">2</text><text x="1.2" y="241.00" font-size="9.9" textLength="4.75" lengthAdjust="spacingAndGlyphs" fill="#5a5a5a">1</text><text x="1.2" y="250.80" font-size="9.9" textLength="4.75" lengthAdjust="spacingAndGlyphs" fill="#5a5a5a">3</text><text x="1.2" y="185.00" font-size="9.9" textLength="4.75" lengthAdjust="spacingAndGlyphs" fill="#5a5a5a">1</text><text x="1.2" y="194.80" font-size="9.9" textLength="4.75" lengthAdjust="spacingAndGlyphs" fill="#5a5a5a">4</text><text x="1.2" y="129.00" font-size="9.9" textLength="4.75" lengthAdjust="spacingAndGlyphs" fill="#5a5a5a">1</text><text x="1.2" y="138.80" font-size="9.9" textLength="4.75" lengthAdjust="spacingAndGlyphs" fill="#5a5a5a">5</text><text x="1.2" y="73.00" font-size="9.9" textLength="4.75" lengthAdjust="spacingAndGlyphs" fill="#5a5a5a">1</text><text x="1.2" y="82.80" font-size="9.9" textLength="4.75" lengthAdjust="spacingAndGlyphs" fill="#5a5a5a">6</text><text x="1.2" y="17.00" font-size="9.9" textLength="4.75" lengthAdjust="spacingAndGlyphs" fill="#5a5a5a">1</text><text x="1.2" y="26.80" font-size="9.9" textLength="4.75" lengthAdjust="spacingAndGlyphs" fill="#5a5a5a">7</text><path d="M12 0.6 L17.8 0.6 L12 6.4 Z" fill="#3e3e3e"/></svg>
<svg style="left:53px;top:80px;overflow:hidden" width="1112" height="969" viewBox="0 0 1112 969"><rect x="0.3" y="0.6" width="1111.4" height="968.4" fill="#fff"/><rect x="1003.0" y="2.5" width="2" height="962.5" fill="#666"/><rect x="210.5" y="963.0" width="794.5" height="2" fill="#666"/><rect x="208.5" y="0.5" width="794.0" height="962.0" fill="none" stroke="#555" stroke-width="1"/><rect x="243.39999999999998" y="28.099999999999994" width="308.6" height="315.5" fill="#e9e5e2" stroke="#4a4a4a" stroke-width="1"/><rect x="271.3" y="49.400000000000006" width="252.49999999999994" height="273.1" fill="#e9e0cb" stroke="#8b877f" stroke-width="1"/><rect x="285.5" y="28.099999999999994" width="224.10000000000002" height="273.6" fill="#fff" stroke="none"/><rect x="285.5" y="49.400000000000006" width="224.10000000000002" height="252.29999999999998" fill="#fff9dd" stroke="none"/><line x1="285.5" y1="49.400000000000006" x2="509.6" y2="49.400000000000006" stroke="#9a968c" stroke-width="1"/><rect x="285.5" y="49.900000000000006" width="224.10000000000002" height="20.400000000000006" fill="#fffdee" stroke="none"/><path d="M285.5 301.7 L509.6 301.7 L552 343.6 L243.39999999999998 343.6 Z" fill="#ffe6d5" stroke="none"/><path d="M285.5 301.7 L243.39999999999998 343.6 M509.6 301.7 L552 343.6" fill="none" stroke="#1a1a1a" stroke-width="0.9"/><path d="M243.39999999999998 343.6 H552" fill="none" stroke="#6a6a6a" stroke-width="1"/><rect x="285.5" y="28.099999999999994" width="224.10000000000002" height="273.6" fill="none" stroke="#555" stroke-width="1"/><rect x="285.5" y="28.099999999999994" width="224.10000000000002" height="42.20000000000002" fill="none" stroke="#1c1c1c" stroke-width="1.05"/><rect x="510.4" y="540.5" width="42.0" height="392.70000000000005" fill="#e9e5e2" stroke="#333" stroke-width="1"/><rect x="236.3" y="715.7" width="315.99999999999994" height="112.5" fill="#e9e5e2" stroke="#333" stroke-width="1"/><rect x="510.9" y="716.2" width="41.0" height="111.5" fill="#ddd6d2"/><rect x="236.3" y="715.7" width="42.19999999999999" height="112.5" fill="#ddd6d2" stroke="#222" stroke-width="1"/><rect x="236.3" y="715.7" width="315.99999999999994" height="112.5" fill="none" stroke="#333" stroke-width="1"/><line x1="510.4" y1="716" x2="510.4" y2="828" stroke="#333" stroke-width="1"/><path d="M404.8 357.8 L461.1 385.8 C456.5 440 457.5 500 466.70000000000005 564.4 L489.5 702 L482.1 750.8 L334.9 750.8 L292.4 701.3 Z" fill="#3c3c3c" fill-opacity="0.305" stroke="#111" stroke-width="1"/><rect x="264.4" y="751.3" width="266.9" height="41.80000000000007" fill="#f3e8cb" stroke="#a9a294" stroke-width="0.8"/><rect x="264.8" y="751.7" width="13.199999999999989" height="41.0" fill="#ebdfc5"/><rect x="510.9" y="751.7" width="20.0" height="41.0" fill="#ebdfc5"/><line x1="278.5" y1="751" x2="278.5" y2="793" stroke="#555" stroke-width="1"/><line x1="510.4" y1="751" x2="510.4" y2="793" stroke="#555" stroke-width="1"/><line x1="482.29999999999995" y1="596.4" x2="580.3" y2="596.4" stroke="#333" stroke-width="0.9"/><line x1="482.29999999999995" y1="877.6" x2="580.3" y2="877.6" stroke="#333" stroke-width="0.9"/><rect x="707.3" y="540.5" width="224.80000000000007" height="392.1" fill="#e9e5e2" stroke="none"/><rect x="664.4" y="715.7" width="309.0000000000001" height="112.29999999999995" fill="#e9e5e2" stroke="#444" stroke-width="1"/><rect x="707.3" y="716.2" width="224.80000000000007" height="111.29999999999995" fill="#ddd6d2"/><rect x="692.4" y="751.4" width="253.0" height="42.0" fill="#f3e9cc" stroke="#a9a294" stroke-width="0.8"/><rect x="707.8" y="751.8" width="223.80000000000007" height="41.200000000000045" fill="#ebdfc2"/><line x1="707.3" y1="793.4" x2="932.1" y2="793.4" stroke="#8a857b" stroke-width="0.8"/><line x1="707.3" y1="751.4" x2="932.1" y2="751.4" stroke="#a9a294" stroke-width="0.8"/><line x1="707.3" y1="715.7" x2="932.1" y2="715.7" stroke="#444" stroke-width="1"/><line x1="707.3" y1="828" x2="932.1" y2="828" stroke="#444" stroke-width="1"/><rect x="707.3" y="540.5" width="224.80000000000007" height="392.1" fill="none" stroke="#111" stroke-width="1.6"/><circle cx="818.9" cy="597.6" r="6.9" fill="#b9b6b5" stroke="#333" stroke-width="0.9"/><circle cx="818.9" cy="877.2" r="6.9" fill="#b9b6b5" stroke="#333" stroke-width="0.9"/><path d="M5.50 0 V969 M33.50 0 V969 M61.50 0 V969 M89.50 0 V969 M117.50 0 V969 M145.50 0 V969 M173.50 0 V969 M201.50 0 V969 M230.50 0 V969 M258.50 0 V969 M286.50 0 V969 M314.50 0 V969 M342.50 0 V969 M370.50 0 V969 M398.50 0 V969 M426.50 0 V969 M454.50 0 V969 M482.50 0 V969 M510.50 0 V969 M538.50 0 V969 M566.50 0 V969 M594.50 0 V969 M623.50 0 V969 M651.50 0 V969 M679.50 0 V969 M707.50 0 V969 M735.50 0 V969 M763.50 0 V969 M791.50 0 V969 M819.50 0 V969 M847.50 0 V969 M875.50 0 V969 M903.50 0 V969 M931.50 0 V969 M959.50 0 V969 M987.50 0 V969 M1016.50 0 V969 M1044.50 0 V969 M1072.50 0 V969 M1100.50 0 V969 M0 7.50 H1112 M0 35.50 H1112 M0 63.50 H1112 M0 91.50 H1112 M0 120.50 H1112 M0 148.50 H1112 M0 176.50 H1112 M0 204.50 H1112 M0 232.50 H1112 M0 260.50 H1112 M0 288.50 H1112 M0 316.50 H1112 M0 344.50 H1112 M0 372.50 H1112 M0 400.50 H1112 M0 428.50 H1112 M0 456.50 H1112 M0 484.50 H1112 M0 512.50 H1112 M0 541.50 H1112 M0 569.50 H1112 M0 597.50 H1112 M0 625.50 H1112 M0 653.50 H1112 M0 681.50 H1112 M0 709.50 H1112 M0 737.50 H1112 M0 765.50 H1112 M0 793.50 H1112 M0 821.50 H1112 M0 849.50 H1112 M0 877.50 H1112 M0 905.50 H1112 M0 934.50 H1112 M0 962.50 H1112" stroke="#3f3fff" stroke-opacity="0.28" stroke-width="1" fill="none" shape-rendering="crispEdges"/></svg>
<div style="left:53px;top:1053px;width:1112px;height:12px;background:#eeeeee;border:1px solid #e8e8e8;"></div>
<div style="left:341px;top:1053px;width:492px;height:12px;background:#cdcdcd;border:1px solid #afafaf;"></div>
<div style="left:1171px;top:84px;width:12px;height:965px;background:#eeeeee;border:1px solid #e8e8e8;"></div>
<div style="left:1171px;top:412px;width:12px;height:310px;background:#cdcdcd;border:1px solid #afafaf;"></div>
<svg style="left:1171.5px;top:1052.5px;" width="11" height="12.5" viewBox="0 0 11 12.5"><path d="M0.5 0.5 L10.5 7 L2.5 12 Z" fill="#d2d4d4" stroke="#dedede" stroke-width="0.5"/></svg>
<div style="left:1166.6px;top:61.4px;width:20.8px;height:21.2px;background:#e3e3e3;border:1px solid #c8c8c8;border-radius:3px;"></div>
<svg style="left:1171px;top:66px;" width="12" height="12" viewBox="0 0 12 12"><rect x="0.7" y="0.7" width="10.6" height="10.6" rx="2" fill="none" stroke="#8a8a8a" stroke-width="1"/><path d="M4.2 4.3 L6.4 3.2 V8.8" fill="none" stroke="#8a8a8a" stroke-width="1"/></svg>
<div style="left:1.1px;top:61.1px;width:29.8px;height:29.8px;background:#e1e1e1;border:1px solid #c6c6c6;border-radius:3px;"></div>
<svg style="left:0;top:0" width="0" height="0"><defs><linearGradient id="gBlue" x1="0" y1="0" x2="1" y2="1"><stop offset="0" stop-color="#e6edf7"/><stop offset="1" stop-color="#8fb0d8"/></linearGradient><linearGradient id="gBlueV" x1="0" y1="0" x2="0" y2="1"><stop offset="0" stop-color="#dfe9f5"/><stop offset="1" stop-color="#7fa3cf"/></linearGradient><linearGradient id="gGrayV" x1="0" y1="0" x2="0" y2="1"><stop offset="0" stop-color="#4a4a4a"/><stop offset="0.45" stop-color="#7d7d7d"/><stop offset="1" stop-color="#c4c4c4"/></linearGradient><linearGradient id="gPink" x1="0" y1="0" x2="1" y2="1"><stop offset="0" stop-color="#fde9df"/><stop offset="1" stop-color="#f2b9a0"/></linearGradient><linearGradient id="gGreen" x1="0" y1="0" x2="1" y2="1"><stop offset="0" stop-color="#2e9a3c"/><stop offset="0.55" stop-color="#bfe3c2"/><stop offset="1" stop-color="#3fa64b"/></linearGradient><linearGradient id="gTeal" x1="0" y1="0" x2="1" y2="1"><stop offset="0" stop-color="#4f8fa6"/><stop offset="1" stop-color="#6fb089"/></linearGradient><linearGradient id="gYel" x1="0" y1="0" x2="1" y2="1"><stop offset="0" stop-color="#fffbd0"/><stop offset="1" stop-color="#f3df6a"/></linearGradient><linearGradient id="gBox1" x1="0" y1="0" x2="1" y2="1"><stop offset="0" stop-color="#9a9bd0"/><stop offset="1" stop-color="#e4e4f6"/></linearGradient><linearGradient id="gBox2" x1="0" y1="0" x2="1" y2="0"><stop offset="0" stop-color="#d7d7f0"/><stop offset="1" stop-color="#f4f4fc"/></linearGradient><linearGradient id="gBox3" x1="0" y1="0" x2="1" y2="1"><stop offset="0" stop-color="#23246e"/><stop offset="1" stop-color="#5b5cae"/></linearGradient><linearGradient id="gLens" x1="0" y1="0" x2="1" y2="1"><stop offset="0" stop-color="#ffffff"/><stop offset="1" stop-color="#b5cde6"/></linearGradient><linearGradient id="gOr" x1="0" y1="0" x2="0" y2="1"><stop offset="0" stop-color="#ffd24a"/><stop offset="1" stop-color="#e58a00"/></linearGradient><linearGradient id="gPen" x1="0" y1="0" x2="1" y2="1"><stop offset="0" stop-color="#bfe0f2"/><stop offset="1" stop-color="#3f7fb0"/></linearGradient><linearGradient id="gLock" x1="0" y1="0" x2="0" y2="1"><stop offset="0" stop-color="#ffe26a"/><stop offset="1" stop-color="#d69a00"/></linearGradient><linearGradient id="gBkt" x1="0" y1="0" x2="1" y2="1"><stop offset="0" stop-color="#ffffff"/><stop offset="1" stop-color="#c9c9c9"/></linearGradient></defs></svg>
<svg style="left:9px;top:66.5px;" width="12.5" height="19.5" viewBox="0 0 12.5 19.5"><path d="M0.3 0.3 L0.3 15.3 L3.9 12 L6.6 18.8 L9.2 17.7 L6.4 11.2 L11.6 11.2 Z" fill="#000"/></svg>
<svg style="left:37.8px;top:64.4px;" width="10.6" height="10.8" viewBox="0 0 10.6 10.8"><path d="M2.6 5 V3.4 A2.7 2.7 0 0 1 8 3.4 V5" fill="none" stroke="#8a8a8a" stroke-width="1.5"/><rect x="0.6" y="4.6" width="9.4" height="5.8" rx="0.8" fill="url(#gLock)" stroke="#a87400" stroke-width="0.8"/><rect x="4.6" y="6.3" width="1.4" height="2.4" fill="#222"/></svg>
<svg style="left:4px;top:96px;" width="24.5" height="24.5" viewBox="0 0 24.5 24.5"><path d="M2.4 19 C2.4 14 3.4 11.6 5 9.4 M9.6 5 C12.4 3.2 15.6 2.4 19.4 2.4" fill="none" stroke="#444" stroke-width="1"/><rect x="3.7" y="3.7" width="5.5" height="5.5" fill="#8f8fe8" stroke="#0a0aff" stroke-width="1.4"/><rect x="19.7" y="0.6" width="3.8" height="3.8" fill="#d4d4ff" stroke="#3a3aff" stroke-width="1"/><rect x="0.6" y="19.5" width="3.8" height="3.8" fill="#d4d4ff" stroke="#3a3aff" stroke-width="1"/><path d="M8.4 8.6 L21 17.4 L16.4 22.2 Z" fill="#000"/><path d="M5.4 8 L8 5.4" stroke="#3a3ad0" stroke-width="0.8"/></svg>
<svg style="left:5px;top:128.6px;" width="22.5" height="23.4" viewBox="0 0 22.5 23.4"><path d="M0.4 12.8 C4.4 12.6 5.8 9.4 7.4 5.8 C8.8 2.6 11 0.9 13.8 0.9 C17 0.9 19.4 3 19 5.6 C18.8 7.2 17.4 7.8 16.2 7.2 C16.6 5.4 15 4.2 13.6 5 C11.4 6.2 11.4 9.8 13.6 11.6 C15.6 13 18.6 13 21.8 12.8 V22 H0.8 Z" fill="url(#gGrayV)"/><path d="M0.8 22.4 H21.8" stroke="#f8f8f8" stroke-width="0.9"/><path d="M0.4 12.6 C4.4 12.6 5.8 9.4 7.4 5.8 C8.8 2.6 11 0.9 13.8 0.9 C17 0.9 19.4 3 19 5.6 C18.8 7.2 17.4 7.8 16.2 7.2" fill="none" stroke="#111" stroke-width="2.7" stroke-linecap="round"/><path d="M0.4 12.6 C4.4 12.6 5.8 9.4 7.4 5.8 C8.8 2.6 11 0.9 13.8 0.9 C17 0.9 19.4 3 19 5.6 C18.8 7.2 17.4 7.8 16.2 7.2" fill="none" stroke="#fff" stroke-width="0.9" stroke-linecap="round"/><path d="M13.8 4.4 C11.4 6 11.4 9.8 13.6 11.6 C15.6 13 18.6 13 21.8 12.8" fill="none" stroke="#111" stroke-width="2.5"/><path d="M13.8 4.4 C11.4 6 11.4 9.8 13.6 11.6 C15.6 13 18.6 13 21.8 12.8" fill="none" stroke="#fff" stroke-width="0.8"/></svg>
<svg style="left:4px;top:159.6px;" width="24" height="24.4" viewBox="0 0 24 24.4"><path d="M15.6 15.4 L20.8 20.6" stroke="#d98200" stroke-width="6.2" stroke-linecap="round"/><path d="M15.4 14.2 L21.4 20.2" stroke="#ffd83a" stroke-width="2.4" stroke-linecap="round"/><path d="M12.6 12.8 L15.4 15.6" stroke="#333" stroke-width="4"/><path d="M13.6 13 L15.2 14.6" stroke="#e8e8e8" stroke-width="1.4"/><circle cx="8.1" cy="8.3" r="7.4" fill="url(#gLens)" stroke="#1a1a1a" stroke-width="1.6"/></svg>
<svg style="left:4px;top:192px;" width="20.4" height="23.6" viewBox="0 0 20.4 23.6"><path d="M0.8 6.2 L10.4 0.8 L19.4 18 L9.8 23 Z" fill="url(#gPink)" stroke="#222" stroke-width="1.3"/><path d="M3 8.6 L5.4 7.3 M4.6 11.4 L8 9.6 M6.2 14.4 L8.6 13.1 M7.8 17.4 L11.2 15.6 M9.4 20.4 L11.8 19.1" stroke="#222" stroke-width="0.9"/></svg>
<svg style="left:7px;top:226.3px;" width="17" height="16.4" viewBox="0 0 17 16.4"><rect x="0.5" y="0.5" width="16" height="15.4" fill="#f1f1ef" stroke="#c4c4c4" stroke-width="1"/></svg>
<svg style="left:5.6px;top:253.8px;" width="21.4" height="23.4" viewBox="0 0 21.4 23.4"><path d="M1 6 L11.4 0.8 L20.6 7.4 L20 18.4 L9.4 22.8 L1.4 16.8 Z" fill="url(#gBox1)" stroke="#222" stroke-width="1.2"/><path d="M11.4 0.8 L20.6 7.4 L20 18.4 L12 13.2 Z" fill="url(#gBox2)"/><path d="M12 13.2 L20 18.4 L9.4 22.8 L1.4 16.8 Z" fill="url(#gBox3)"/><path d="M1 6 L11.4 0.8 L20.6 7.4 L20 18.4 L9.4 22.8 L1.4 16.8 Z" fill="none" stroke="#222" stroke-width="1.2"/></svg>
<svg style="left:7px;top:289px;" width="17" height="16" viewBox="0 0 17 16"><ellipse cx="8.5" cy="8" rx="8" ry="7.5" fill="#f1f1ef" stroke="#c0c0c0" stroke-width="1"/></svg>
<svg style="left:4.2px;top:317.4px;" width="23.6" height="21.6" viewBox="0 0 23.6 21.6"><path d="M1 5.8 L8 0.8 L14.6 4.6 L12.6 12.6 L3.4 14 Z" fill="url(#gYel)" stroke="#222" stroke-width="1.1"/><path d="M14.4 4.8 L16.6 10.4 L22.8 11 L18 14.8 L19.4 20.8 L14 17.4 L8.6 20.4 L10.2 14.4 L5.6 10.6 L11.8 10.4 Z" fill="url(#gYel)" stroke="#222" stroke-width="1.1"/></svg>
<svg style="left:5px;top:348.4px;" width="22" height="22.6" viewBox="0 0 22 22.6"><path d="M10.4 12.6 C9.6 10.6 12.4 9.4 13.8 11.2 C15.6 13.6 13.4 16.8 10.4 16.8 C6.6 16.8 4.4 12.8 6 9.4 C7.8 5.4 13.4 4.4 16.8 7.4 C20.8 11 20.2 17.4 16.4 20.4 C14.4 22 11.6 22.4 9.4 21.8 M10.4 0.8 C4.6 0.6 0.2 6.2 0.8 12 C1.2 16.6 4.6 20.6 9.4 21.8 M10.4 0.8 C16 1 20.6 4.8 21.4 10.6 C21.6 13 21.4 15 21 16.6" fill="none" stroke="#111" stroke-width="1.25"/></svg>
<svg style="left:7px;top:380.6px;" width="19.4" height="20" viewBox="0 0 19.4 20"><path d="M1 19 L3 13.2 L14.4 1.6 C15.8 0.4 18.4 2.6 17.6 4.4 L6.4 16.6 Z" fill="#d9a53f" stroke="#8a5a12" stroke-width="0.9"/><path d="M14.4 1.6 C15.8 0.4 18.4 2.6 17.6 4.4 L16 6 L12.8 3.2 Z" fill="#e63030" stroke="#a01010" stroke-width="0.7"/><path d="M1 19 L3 13.2 L6.4 16.6 Z" fill="#f0d9a8" stroke="#8a5a12" stroke-width="0.7"/><path d="M1 19 L1.8 16.8 L3 18.2 Z" fill="#333"/></svg>
<svg style="left:4px;top:409.5px;" width="24.6" height="25" viewBox="0 0 24.6 25"><path d="M1.9 1.9 H13.6 M1.9 1.9 C7.6 5.6 10.8 12.6 9.3 16.6 C8.6 18.6 7.4 19.8 5.4 20.6" fill="none" stroke="#111" stroke-width="1.05"/><path d="M4.3 22.3 H10.4" stroke="#111" stroke-width="1"/><rect x="0.6" y="20.1" width="3.7" height="3.9" fill="#fff" stroke="#111" stroke-width="1.1"/><circle cx="11.4" cy="22.5" r="1.15" fill="#fff" stroke="#111" stroke-width="0.9"/><path d="M16.4 0.7 C19.6 1.2 22.6 3.8 23.8 7.2 L20.7 12.1 L13.6 8.4 Z" fill="url(#gPen)" stroke="#111" stroke-width="1"/><path d="M14.4 9.6 L19.4 12.4 L18.4 14.6 L13.6 12 Z" fill="#f6c840" stroke="#6a5210" stroke-width="0.6"/><path d="M14.4 12.6 L12.2 20.2 L17.6 14.4" fill="#f2f2f2" stroke="#111" stroke-width="0.9"/><path d="M12.4 20 L15.6 13.6" stroke="#111" stroke-width="0.8"/></svg>
<svg style="left:4px;top:441.3px;" width="24.6" height="25" viewBox="0 0 24.6 25"><path d="M0 1 C6.4 0.6 9.6 3.6 8.4 9.6 C7.6 14 6.8 18.4 9.2 20.6 C12.4 23.2 17 19.4 23.4 19.8 C17.6 20.8 14.6 25.4 9.4 24.2 C4 23 2.4 17.6 3 12.4 C3.6 7.4 4 3 0 1 Z" fill="#0c0c0c"/><path d="M15.2 1.6 L23.8 3.6 L22 7.6 L14.6 5 Z" fill="url(#gPen)" stroke="#1d4f78" stroke-width="0.6"/><path d="M16.2 5.2 L21.4 7 L20.8 9 L15.6 7 Z" fill="#c81414"/><path d="M10.5 10.6 L16.2 6.8 L20 10.8 L19 14.4 L11 20.8 Z" fill="#f6cf3e" stroke="#111" stroke-width="1"/><path d="M11.6 11.6 L15.4 8.8 L13 17.6 Z" fill="#fff6c8"/><path d="M11.4 20.2 L14 12.6" stroke="#111" stroke-width="0.8"/><circle cx="14.1" cy="12.2" r="1.05" fill="#111"/></svg>
<div class="t" style="left:5.2px;top:467.4px;font-weight:bold;font-size:27.5px;line-height:34px;height:34px;color:#161616;-webkit-text-stroke:0.8px #161616;text-shadow:0 1.3px 1.2px rgba(0,0,0,0.4);transform:scaleX(1.1);transform-origin:0 0;">A</div>
<svg style="left:5.6px;top:505.5px;" width="22.4" height="22.4" viewBox="0 0 22.4 22.4"><path d="M10.6 8.8 C10.6 6.4 13.6 4.6 16 5.6 L21 8 C22 10 21.8 18.6 20.4 21.6 L12.4 19 C10.6 16 10.4 12 10.6 8.8 Z" fill="#3fae3a" stroke="#1c5a1a" stroke-width="0.9"/><path d="M11.4 9.4 C13 9 17.4 10.4 20.8 12" stroke="#d8f0d0" stroke-width="1" fill="none"/><path d="M12 6.2 L12.6 3.6 C14 2.2 16.6 3 17 4.6 L17.6 6.4" fill="#f4f4f4" stroke="#333" stroke-width="0.9"/><g fill="#222"><circle cx="1.8" cy="1.6" r="1"/><circle cx="4.8" cy="2.8" r="0.9"/><circle cx="1.4" cy="5.4" r="0.9"/><circle cx="4.6" cy="6.4" r="0.9"/><circle cx="7.6" cy="5" r="0.8"/><circle cx="2.6" cy="9" r="0.9"/><circle cx="6.2" cy="9.6" r="0.8"/><circle cx="8.8" cy="7.6" r="0.7"/><circle cx="4" cy="12" r="0.8"/></g></svg>
<svg style="left:5.3px;top:535.6px;" width="20.6" height="24.2" viewBox="0 0 20.6 24.2"><path d="M9.6 0.8 L19.8 6.6 L10.4 23.2 L0.8 17.4 Z" fill="url(#gPink)" stroke="#222" stroke-width="1.2"/></svg>
<svg style="left:4.4px;top:567.4px;" width="22.4" height="22.4" viewBox="0 0 22.4 22.4"><path d="M1 5.8 H5.6 V9 L3.6 10 V16.6 H1 Z" fill="#7d93c8" stroke="#4a5f98" stroke-width="0.8"/><path d="M6 8.6 L16 3.4 L21.6 15.4 L11.4 21.4 C9.4 21.8 8.6 20.8 8 19.4 Z" fill="url(#gBkt)" stroke="#4a4a4a" stroke-width="1"/><path d="M12.4 8.4 C11 3.6 13 0.8 15.6 0.8 C18.4 0.8 19.6 4 19.4 7" fill="none" stroke="#666" stroke-width="1.1"/><circle cx="12.6" cy="10.6" r="2.2" fill="#aaa" stroke="#555" stroke-width="0.9"/></svg>
<svg style="left:5px;top:598.8px;" width="22" height="22.4" viewBox="0 0 22 22.4"><rect x="0" y="0" width="22" height="22.4" fill="url(#gGreen)"/><path d="M5.6 6.2 L16.8 16.6" stroke="#111" stroke-width="1.3"/><rect x="3.6" y="4.2" width="3.8" height="3.8" fill="#fff" stroke="#111" stroke-width="1.1"/><rect x="15" y="14.8" width="3.8" height="3.8" fill="#fff" stroke="#111" stroke-width="1.1"/></svg>
<svg style="left:5.3px;top:631.8px;" width="21.4" height="20.4" viewBox="0 0 21.4 20.4"><path d="M3 3 C8 5.4 13 5.4 18.4 3 C16.6 8 16.8 12.6 18.4 17.4 C13 15.4 8 15.4 3 17.4 C5.4 12.6 5.4 8 3 3 Z" fill="url(#gTeal)" stroke="#2a6a70" stroke-width="0.7"/><g fill="#fff" stroke="#111" stroke-width="1.1"><rect x="0.7" y="0.7" width="4" height="4"/><rect x="16.6" y="0.7" width="4" height="4"/><rect x="0.7" y="15.6" width="4" height="4"/><rect x="16.6" y="15.6" width="4" height="4"/></g></svg>
<svg style="left:7px;top:661.8px;" width="21.4" height="25" viewBox="0 0 21.4 25"><path d="M11.4 8 L3.6 17.6 L2.6 20.6 L5.4 19.4 L13.6 10" fill="#d6e4f2" stroke="#333" stroke-width="1"/><path d="M10.4 6.4 L15.4 11 M12.6 8.6 L17.4 3.4" stroke="#111" stroke-width="2.2"/><circle cx="17" cy="4.2" r="3.6" fill="#111"/><path d="M2.2 20.6 C0.8 22.6 1.2 24.4 2.4 24.4 C3.6 24.4 3.8 22.6 2.2 20.6 Z" fill="#5b8fd0" stroke="#2a4f8a" stroke-width="0.6"/></svg>
<svg style="left:3.9px;top:693.5px;" width="24.6" height="25" viewBox="0 0 24.6 25"><path d="M10 7 V10 H4.4 V17.6 M14 4 H17 C20 4 20.6 6 20.6 9 V17.6" fill="none" stroke="#111" stroke-width="1.1"/><g stroke="#1d3f6a" stroke-width="1"><rect x="6" y="0.7" width="7.4" height="6.4" fill="url(#gBlueV)"/><rect x="0.7" y="17.6" width="7.4" height="6.4" fill="url(#gBlueV)"/><rect x="16.6" y="17.6" width="7.4" height="6.4" fill="url(#gBlueV)"/></g><rect x="8.6" y="10.8" width="7.6" height="4.6" fill="#f6c93a" stroke="#6a5a10" stroke-width="0.9"/></svg>
<div style="left:1190px;top:60px;width:366px;height:1009px;border:1px solid #b2b2b2;background:#efefef;"></div>
<svg style="left:1193.2px;top:66.6px;" width="16" height="16" viewBox="0 0 16 16"><rect x="0.6" y="0.6" width="14.8" height="14.8" fill="#fff" stroke="#111" stroke-width="1.2"/><rect x="1.2" y="1.2" width="13.6" height="2.4" fill="#b8cde6"/><line x1="0.6" y1="3.9" x2="15.4" y2="3.9" stroke="#111" stroke-width="0.9"/><path d="M6.3 6.6 L2.8 9.6 L6.3 12.6 M9.7 6.6 L13.2 9.6 L9.7 12.6" fill="none" stroke="#222" stroke-width="1.2"/></svg>
<div class="t" style="left:1210.2px;top:66.9px;color:#4a4a4a;">XML Editor (Shift+Ctrl+X)</div>
<div style="left:1515px;top:69px;width:11px;height:11px;border:1px solid #9c9c9c;border-radius:2.5px;background:#efefef;"></div>
<svg style="left:1517.5px;top:71px;" width="5" height="6" viewBox="0 0 5 6"><path d="M4.6 0.6 L0.8 2.9 L4.6 5.2 Z" fill="#8c8c8c"/></svg>
<div style="left:1537.0px;top:69px;width:11px;height:11px;border:1px solid #9c9c9c;border-radius:2.5px;background:#efefef;"></div>
<svg style="left:1539.3px;top:71.3px;" width="6.4" height="6.4" viewBox="0 0 6.4 6.4"><path d="M0.6 0.6 L5.8 5.8 M5.8 0.6 L0.6 5.8" stroke="#929292" stroke-width="1.9" fill="none"/></svg>
<div style="left:1193px;top:85px;width:360px;height:269px;border:1px solid #bababa;background:#efefef;box-shadow:inset -1px -1px 0 #f9f9f9;"></div>
<svg style="left:1203px;top:94.6px;" width="24" height="24" viewBox="0 0 24 24"><rect x="0.5" y="0.5" width="21.5" height="21" rx="1" fill="#e6e6e6" stroke="#adadad" stroke-width="1"/><text x="11.2" y="9.6" font-size="9.5" text-anchor="middle" fill="#adadad" font-family="Liberation Sans, sans-serif">xml</text><path d="M7.2 12 L3.8 15.3 L7.2 18.6 M10.2 12 L13.6 15.3 L10.2 18.6" fill="none" stroke="#adadad" stroke-width="1.1"/><rect x="14.8" y="14.8" width="8.4" height="8.4" rx="1" fill="#f4f4f4" stroke="#adadad" stroke-width="0.9"/><path d="M19 16.4 V21.6 M16.4 19 H21.6" stroke="#9e9e9e" stroke-width="1.7"/></svg>
<svg style="left:1237px;top:94.6px;" width="24" height="24" viewBox="0 0 24 24"><rect x="0.5" y="0.5" width="21.5" height="21" rx="1" fill="#e6e6e6" stroke="#adadad" stroke-width="1"/><text x="11.2" y="9.6" font-size="9.5" text-anchor="middle" fill="#adadad" font-family="Liberation Sans, sans-serif">abc</text><path d="M7.2 12 L3.8 15.3 L7.2 18.6 M10.2 12 L13.6 15.3 L10.2 18.6" fill="none" stroke="#adadad" stroke-width="1.1"/><rect x="14.8" y="14.8" width="8.4" height="8.4" rx="1" fill="#f4f4f4" stroke="#adadad" stroke-width="0.9"/><path d="M19 16.4 V21.6 M16.4 19 H21.6" stroke="#9e9e9e" stroke-width="1.7"/></svg>
<svg style="left:1271px;top:94.6px;" width="24" height="24" viewBox="0 0 24 24"><rect x="0.5" y="0.5" width="14.5" height="14" rx="1" fill="#ececec" stroke="#c6c6c6" stroke-width="1"/><rect x="5.5" y="6" width="15.5" height="15.5" rx="1" fill="#ececec" stroke="#adadad" stroke-width="1"/><path d="M10.6 9.5 L7.6 12.5 L10.6 15.5 M13.6 9.5 L16.6 12.5 L13.6 15.5" fill="none" stroke="#adadad" stroke-width="1.1"/><rect x="14.8" y="14.8" width="8.4" height="8.4" rx="1" fill="#f4f4f4" stroke="#adadad" stroke-width="0.9"/><path d="M19 16.4 V21.6 M16.4 19 H21.6" stroke="#9e9e9e" stroke-width="1.7"/></svg>
<svg style="left:1317px;top:94.6px;" width="24" height="24" viewBox="0 0 24 24"><rect x="0.5" y="0.5" width="21.5" height="21" rx="1" fill="#e6e6e6" stroke="#adadad" stroke-width="1"/><text x="11.2" y="9.6" font-size="9.5" text-anchor="middle" fill="#adadad" font-family="Liberation Sans, sans-serif">xml</text><path d="M7.2 12 L3.8 15.3 L7.2 18.6 M10.2 12 L13.6 15.3 L10.2 18.6" fill="none" stroke="#adadad" stroke-width="1.1"/><rect x="14.8" y="14.8" width="8.4" height="8.4" rx="1.6" fill="#c4bfbf" stroke="#c4bfbf" stroke-width="0.9"/><path d="M16.8 16.8 L21.2 21.2 M21.2 16.8 L16.8 21.2" stroke="#f2f2f2" stroke-width="1.6"/></svg>
<div style="left:1305.5px;top:96.3px;width:1px;height:18.5px;background:#cfcfcf;"></div>
<div style="left:1351.3px;top:96.3px;width:1px;height:18.5px;background:#cfcfcf;"></div>
<svg style="left:1364px;top:96.4px;" width="23" height="20" viewBox="0 0 23 20"><g stroke="#c0c0c0" stroke-width="2.3" stroke-linecap="round" fill="none"><path d="M10.4 1.8 H21"/><path d="M1.4 6.2 H13"/><path d="M1.4 10 H9"/><path d="M1.4 13.8 H11"/><path d="M10.4 18.2 H19"/></g><path d="M20 5.6 L15.6 10 L20 14.4 M22.6 5.6 L18.2 10 L22.6 14.4" fill="none" stroke="#d2c6ca" stroke-width="1.1"/></svg>
<svg style="left:1422px;top:103px;" width="8" height="8" viewBox="0 0 8 8"><path d="M0.6 0.8 L7 0.8 L3.8 6.8 Z" fill="#a8a8a8" stroke="#888" stroke-width="0.6"/></svg>
<div style="left:1198.4px;top:124.3px;width:239.3px;height:203.7px;background:#fff;border:1px solid #c2c2c2;overflow:hidden;"></div>
<div style="left:1218.8px;top:127.4px;width:206.4000000000001px;height:16.0px;overflow:hidden;"><div class="t" style="left:0;top:0;color:#3c3c3c;">&lt;svg:svg id="svg8"&gt;</div></div>
<svg style="left:1201.3px;top:130.9px;" width="10" height="9" viewBox="0 0 10 9"><path d="M0.6 0.8 H9.2 L4.9 8.4 Z" fill="#666" stroke="#444" stroke-width="0.7"/></svg>
<div style="left:1233.8px;top:147.4px;width:191.4000000000001px;height:16.0px;overflow:hidden;"><div class="t" style="left:0;top:0;color:#3c3c3c;">&lt;svg:defs id="defs2"&gt;</div></div>
<div style="left:1233.8px;top:167.4px;width:191.4000000000001px;height:16.0px;overflow:hidden;"><div class="t" style="left:0;top:0;color:#3c3c3c;"><span style="letter-spacing:0.19px">&lt;sodipodi:namedview id="base"&gt;</span></div></div>
<svg style="left:1216.8px;top:170.4px;" width="9" height="10" viewBox="0 0 9 10"><path d="M0.8 0.6 V9.4 L8.4 5 Z" fill="#666" stroke="#444" stroke-width="0.7"/></svg>
<div style="left:1233.8px;top:187.4px;width:191.4000000000001px;height:16.0px;overflow:hidden;"><div class="t" style="left:0;top:0;color:#3c3c3c;"><span style="letter-spacing:0.18px">&lt;svg:metadata id="metadata5"&gt;</span></div></div>
<svg style="left:1216.8px;top:190.4px;" width="9" height="10" viewBox="0 0 9 10"><path d="M0.8 0.6 V9.4 L8.4 5 Z" fill="#666" stroke="#444" stroke-width="0.7"/></svg>
<div style="left:1233.8px;top:207.4px;width:191.4000000000001px;height:16.0px;overflow:hidden;"><div class="t" style="left:0;top:0;color:#3c3c3c;">&lt;svg:g id="layer1" inkscape:label="Layer 1"&gt;</div></div>
<svg style="left:1216.3px;top:210.9px;" width="10" height="9" viewBox="0 0 10 9"><path d="M0.6 0.8 H9.2 L4.9 8.4 Z" fill="#666" stroke="#444" stroke-width="0.7"/></svg>
<div style="left:1248.8px;top:227.4px;width:176.4000000000001px;height:16.0px;overflow:hidden;"><div class="t" style="left:0;top:0;color:#3c3c3c;">&lt;svg:g id="g5177"&gt;</div></div>
<svg style="left:1231.3px;top:230.9px;" width="10" height="9" viewBox="0 0 10 9"><path d="M0.6 0.8 H9.2 L4.9 8.4 Z" fill="#666" stroke="#444" stroke-width="0.7"/></svg>
<div style="left:1263.8px;top:247.4px;width:161.4000000000001px;height:16.0px;overflow:hidden;"><div class="t" style="left:0;top:0;color:#3c3c3c;">&lt;svg:rect id="rect4489"&gt;</div></div>
<div style="left:1263.8px;top:267.4px;width:161.4000000000001px;height:16.0px;overflow:hidden;"><div class="t" style="left:0;top:0;color:#3c3c3c;">&lt;svg:rect id="rect4491"&gt;</div></div>
<div style="left:1263.8px;top:287.4px;width:161.4000000000001px;height:16.0px;overflow:hidden;"><div class="t" style="left:0;top:0;color:#3c3c3c;">&lt;svg:path id="rect4493"&gt;</div></div>
<div style="left:1263.8px;top:307.4px;width:161.4000000000001px;height:7.6px;overflow:hidden;"><div class="t" style="left:0;top:0;color:#3c3c3c;">&lt;svg:path id="path4498"&gt;</div></div>
<div style="left:1425.4px;top:125.3px;width:11.3px;height:190px;background:#ebebeb;"></div>
<div style="left:1425.7px;top:125.3px;width:10.7px;height:79.4px;background:#c8c8c8;"></div>
<div style="left:1199.4px;top:315px;width:237.3px;height:11.3px;background:#ebebeb;"></div>
<div style="left:1199.4px;top:315.3px;width:155.6px;height:10.7px;background:#c8c8c8;"></div>
<div class="t" style="left:1198.3px;top:332.1px;color:#3c3c3c;letter-spacing:0.09px;"><b>Click</b> to select nodes, <b>drag</b> to rearrange.</div>
<svg style="left:1370px;top:355.5px;" width="8" height="2" viewBox="0 0 8 2"><rect x="0" y="0" width="1" height="1" fill="#b5b5b5"/><rect x="3" y="0" width="1" height="1" fill="#b5b5b5"/><rect x="6" y="0" width="1" height="1" fill="#b5b5b5"/></svg>
<svg style="left:1194px;top:362px;" width="16" height="16" viewBox="0 0 16 16"><line x1="1" y1="0.5" x2="1" y2="15.5" stroke="#d40000" stroke-width="1.1"/><rect x="3" y="1.6" width="4.6" height="3.2" fill="#cfe0f2" stroke="#222" stroke-width="0.9"/><rect x="3" y="6.4" width="11.6" height="3.2" fill="#cfe0f2" stroke="#222" stroke-width="0.9"/><rect x="3" y="11.2" width="8.2" height="3.2" fill="#9db8d8" stroke="#222" stroke-width="0.9"/></svg>
<div class="t" style="left:1211.4px;top:362.4px;color:#4a4a4a;letter-spacing:0.07px;">Align and Distribute (Shift+Ctrl+A)</div>
<div style="left:1514px;top:365px;width:11px;height:11px;border:1px solid #9c9c9c;border-radius:2.5px;background:#efefef;"></div>
<svg style="left:1516.5px;top:367px;" width="5" height="6" viewBox="0 0 5 6"><path d="M4.6 0.6 L0.8 2.9 L4.6 5.2 Z" fill="#8c8c8c"/></svg>
<div style="left:1535.5px;top:365px;width:11px;height:11px;border:1px solid #9c9c9c;border-radius:2.5px;background:#efefef;"></div>
<svg style="left:1537.8px;top:367.3px;" width="6.4" height="6.4" viewBox="0 0 6.4 6.4"><path d="M0.6 0.6 L5.8 5.8 M5.8 0.6 L0.6 5.8" stroke="#929292" stroke-width="1.9" fill="none"/></svg>
<div style="left:1194px;top:381px;width:358px;height:509px;border:1px solid #bababa;background:#efefef;box-shadow:inset -1px -1px 0 #f9f9f9;"></div>
<div class="t" style="left:1204px;top:387.6px;font-weight:bold;color:#5e5e5e;letter-spacing:0.18px;">Align</div>
<div class="t" style="left:1350px;top:420.5px;color:#4a4a4a;letter-spacing:0.1px;">Relative to:</div>
<div style="left:1420px;top:409px;width:124px;height:39px;background:#fff;border:1px solid #cdcdcd;border-radius:3px;"></div>
<div class="t" style="left:1425px;top:420.7px;color:#333;">Last selected</div>
<svg style="left:1530.4px;top:421.5px;" width="6" height="15.4" viewBox="0 0 6 15.4"><path d="M0.4 5 L3 0.3 L5.6 5 Z M0.4 10.4 L3 15.1 L5.6 10.4 Z" fill="#999" stroke="#666" stroke-width="0.7"/></svg>
<div class="t" style="left:1374px;top:457.4px;color:#4a4a4a;letter-spacing:0.12px;"><u>T</u>reat selection as group:</div>
<div style="left:1527px;top:458.3px;width:14px;height:14.3px;background:#fff;border:1px solid #cdcdcd;border-radius:3px;"></div>
<div class="t" style="left:1204.5px;top:568.5px;font-weight:bold;color:#5e5e5e;letter-spacing:0.37px;">Distribute</div>
<div class="t" style="left:1204.5px;top:698px;font-weight:bold;color:#5e5e5e;letter-spacing:0.47px;">Rearrange</div>
<div class="t" style="left:1204.5px;top:792.7px;font-weight:bold;color:#5e5e5e;letter-spacing:0.17px;">Remove overlaps</div>
<div class="t" style="left:1355px;top:822.7px;color:#4a4a4a;"><u>H</u>:</div>
<div style="left:1372px;top:817.2px;width:57.4px;height:25.5px;background:#fff;border:1px solid #cdcdcd;border-radius:3px;"></div>
<div style="left:1414.9px;top:818.2px;width:1px;height:23.5px;background:#dcdcdc;"></div>
<svg style="left:1419.1000000000001px;top:821.4000000000001px;" width="6" height="17" viewBox="0 0 6 17"><path d="M0.5 5.2 L3 0.6 L5.5 5.2 Z M0.5 11.6 L3 16.2 L5.5 11.6 Z" fill="#999" stroke="#666" stroke-width="0.7"/></svg>
<div class="t" style="left:1376px;top:822.0px;color:#333;">0.0</div>
<div class="t" style="left:1434.2px;top:822.7px;color:#4a4a4a;"><u>V</u>:</div>
<div style="left:1449.2px;top:817.2px;width:57.4px;height:25.5px;background:#fff;border:1px solid #cdcdcd;border-radius:3px;"></div>
<div style="left:1492.1000000000001px;top:818.2px;width:1px;height:23.5px;background:#dcdcdc;"></div>
<svg style="left:1496.3000000000002px;top:821.4000000000001px;" width="6" height="17" viewBox="0 0 6 17"><path d="M0.5 5.2 L3 0.6 L5.5 5.2 Z M0.5 11.6 L3 16.2 L5.5 11.6 Z" fill="#999" stroke="#666" stroke-width="0.7"/></svg>
<div class="t" style="left:1453.2px;top:822.0px;color:#333;">0.0</div>
<div style="left:1195px;top:893px;width:358px;height:24px;background:#e1e1e1;border:1px solid #b6b6b6;border-radius:3.5px;"></div>
<div class="t" style="left:1217.2px;top:898px;color:#4a4a4a;letter-spacing:0.08px;">Align and Distribute (Shift+Ctrl+A)</div>
<svg style="left:1538.4px;top:901px;" width="8" height="8" viewBox="0 0 8 8"><path d="M0.6 7.2 L4 0.8 L7.4 7.2 Z" fill="#8a8a8a" stroke="#8a8a8a" stroke-width="0.5"/></svg>
<div style="left:1195px;top:919px;width:358px;height:24px;background:#fdfdfd;border:1px solid #c9c9c9;border-radius:3.5px;"></div>
<div class="t" style="left:1217.2px;top:924px;color:#4a4a4a;letter-spacing:-0.05px;">Export PNG Image (Shift+Ctrl+E)</div>
<svg style="left:1538.4px;top:927px;" width="8" height="8" viewBox="0 0 8 8"><path d="M0.6 7.2 L4 0.8 L7.4 7.2 Z" fill="#bcbcbc" stroke="#bcbcbc" stroke-width="0.5"/></svg>
<div style="left:1195px;top:945px;width:358px;height:24px;background:#fdfdfd;border:1px solid #c9c9c9;border-radius:3.5px;"></div>
<div class="t" style="left:1217.2px;top:950px;color:#4a4a4a;letter-spacing:0px;">Fill and Stroke (Shift+Ctrl+F)</div>
<svg style="left:1538.4px;top:953px;" width="8" height="8" viewBox="0 0 8 8"><path d="M0.6 7.2 L4 0.8 L7.4 7.2 Z" fill="#bcbcbc" stroke="#bcbcbc" stroke-width="0.5"/></svg>
<div style="left:1195px;top:971px;width:358px;height:24px;background:#fdfdfd;border:1px solid #c9c9c9;border-radius:3.5px;"></div>
<div class="t" style="left:1217.2px;top:976px;color:#4a4a4a;letter-spacing:0px;">Layers (Shift+Ctrl+L)</div>
<svg style="left:1538.4px;top:979px;" width="8" height="8" viewBox="0 0 8 8"><path d="M0.6 7.2 L4 0.8 L7.4 7.2 Z" fill="#bcbcbc" stroke="#bcbcbc" stroke-width="0.5"/></svg>
<div style="left:1195px;top:997px;width:358px;height:24px;background:#fdfdfd;border:1px solid #c9c9c9;border-radius:3.5px;"></div>
<div class="t" style="left:1217.2px;top:1002px;color:#4a4a4a;letter-spacing:0px;">Text and Font (Shift+Ctrl+T)</div>
<svg style="left:1538.4px;top:1005px;" width="8" height="8" viewBox="0 0 8 8"><path d="M0.6 7.2 L4 0.8 L7.4 7.2 Z" fill="#bcbcbc" stroke="#bcbcbc" stroke-width="0.5"/></svg>
<div style="left:1195px;top:1023px;width:358px;height:24px;background:#fdfdfd;border:1px solid #c9c9c9;border-radius:3.5px;"></div>
<div class="t" style="left:1217.2px;top:1028px;color:#4a4a4a;letter-spacing:0px;">Transform (Shift+Ctrl+M)</div>
<svg style="left:1538.4px;top:1031px;" width="8" height="8" viewBox="0 0 8 8"><path d="M0.6 7.2 L4 0.8 L7.4 7.2 Z" fill="#bcbcbc" stroke="#bcbcbc" stroke-width="0.5"/></svg>
<svg style="left:1370px;top:1051.5px;" width="8" height="2" viewBox="0 0 8 2"><rect x="0" y="0" width="1" height="1" fill="#b5b5b5"/><rect x="3" y="0" width="1" height="1" fill="#b5b5b5"/><rect x="6" y="0" width="1" height="1" fill="#b5b5b5"/></svg>
<svg style="left:0;top:1069px;overflow:hidden" width="1606.5" height="18" viewBox="0 0 1606.5 18"><rect x="0" y="0" width="1606.5" height="1" fill="#b6b6b6"/><rect x="0.5" y="1" width="16" height="16" fill="#fff"/><path d="M1.5 2 L15.5 16 M15.5 2 L1.5 16" stroke="#8b0000" stroke-width="1.6" fill="none"/><rect x="17" y="1" width="16.2" height="16" fill="#000000"/><rect x="33" y="1" width="16.2" height="16" fill="#1a1a1a"/><rect x="49" y="1" width="16.2" height="16" fill="#333333"/><rect x="65" y="1" width="16.2" height="16" fill="#4d4d4d"/><rect x="81" y="1" width="16.2" height="16" fill="#666666"/><rect x="97" y="1" width="16.2" height="16" fill="#808080"/><rect x="113" y="1" width="16.2" height="16" fill="#999999"/><rect x="129" y="1" width="16.2" height="16" fill="#b3b3b3"/><rect x="145" y="1" width="16.2" height="16" fill="#cccccc"/><rect x="161" y="1" width="16.2" height="16" fill="#e6e6e6"/><rect x="177" y="1" width="16.2" height="16" fill="#ececec"/><rect x="193" y="1" width="16.2" height="16" fill="#f2f2f2"/><rect x="209" y="1" width="16.2" height="16" fill="#f9f9f9"/><rect x="225" y="1" width="16.2" height="16" fill="#ffffff"/><rect x="241" y="1" width="16.2" height="16" fill="#800000"/><rect x="257" y="1" width="16.2" height="16" fill="#ff0000"/><rect x="273" y="1" width="16.2" height="16" fill="#808000"/><rect x="289" y="1" width="16.2" height="16" fill="#ffff00"/><rect x="305" y="1" width="16.2" height="16" fill="#008000"/><rect x="321" y="1" width="16.2" height="16" fill="#00ff00"/><rect x="337" y="1" width="16.2" height="16" fill="#008080"/><rect x="353" y="1" width="16.2" height="16" fill="#00ffff"/><rect x="369" y="1" width="16.2" height="16" fill="#000080"/><rect x="385" y="1" width="16.2" height="16" fill="#0000ff"/><rect x="401" y="1" width="16.2" height="16" fill="#800080"/><rect x="417" y="1" width="16.2" height="16" fill="#ff00ff"/><rect x="433" y="1" width="16.2" height="16" fill="#2b0000"/><rect x="449" y="1" width="16.2" height="16" fill="#550000"/><rect x="465" y="1" width="16.2" height="16" fill="#800000"/><rect x="481" y="1" width="16.2" height="16" fill="#aa0000"/><rect x="497" y="1" width="16.2" height="16" fill="#d40000"/><rect x="513" y="1" width="16.2" height="16" fill="#ff0000"/><rect x="529" y="1" width="16.2" height="16" fill="#ff2a2a"/><rect x="545" y="1" width="16.2" height="16" fill="#ff5555"/><rect x="561" y="1" width="16.2" height="16" fill="#ff8080"/><rect x="577" y="1" width="16.2" height="16" fill="#ffaaaa"/><rect x="593" y="1" width="16.2" height="16" fill="#ffd5d5"/><rect x="609" y="1" width="16.2" height="16" fill="#280b0b"/><rect x="625" y="1" width="16.2" height="16" fill="#501616"/><rect x="641" y="1" width="16.2" height="16" fill="#782121"/><rect x="657" y="1" width="16.2" height="16" fill="#a02c2c"/><rect x="673" y="1" width="16.2" height="16" fill="#c83737"/><rect x="689" y="1" width="16.2" height="16" fill="#d35f5f"/><rect x="705" y="1" width="16.2" height="16" fill="#de8787"/><rect x="721" y="1" width="16.2" height="16" fill="#e9afaf"/><rect x="737" y="1" width="16.2" height="16" fill="#f4d7d7"/><rect x="753" y="1" width="16.2" height="16" fill="#241c1c"/><rect x="769" y="1" width="16.2" height="16" fill="#483737"/><rect x="785" y="1" width="16.2" height="16" fill="#6c5353"/><rect x="801" y="1" width="16.2" height="16" fill="#916f6f"/><rect x="817" y="1" width="16.2" height="16" fill="#ac9393"/><rect x="833" y="1" width="16.2" height="16" fill="#c8b7b7"/><rect x="849" y="1" width="16.2" height="16" fill="#e3dbdb"/><rect x="865" y="1" width="16.2" height="16" fill="#2b1100"/><rect x="881" y="1" width="16.2" height="16" fill="#552200"/><rect x="897" y="1" width="16.2" height="16" fill="#803300"/><rect x="913" y="1" width="16.2" height="16" fill="#aa4400"/><rect x="929" y="1" width="16.2" height="16" fill="#d45500"/><rect x="945" y="1" width="16.2" height="16" fill="#ff6600"/><rect x="961" y="1" width="16.2" height="16" fill="#ff7f2a"/><rect x="977" y="1" width="16.2" height="16" fill="#ff9955"/><rect x="993" y="1" width="16.2" height="16" fill="#ffb380"/><rect x="1009" y="1" width="16.2" height="16" fill="#ffccaa"/><rect x="1025" y="1" width="16.2" height="16" fill="#ffe6d5"/><rect x="1041" y="1" width="16.2" height="16" fill="#28170b"/><rect x="1057" y="1" width="16.2" height="16" fill="#502d16"/><rect x="1073" y="1" width="16.2" height="16" fill="#784421"/><rect x="1089" y="1" width="16.2" height="16" fill="#a05a2c"/><rect x="1105" y="1" width="16.2" height="16" fill="#c87137"/><rect x="1121" y="1" width="16.2" height="16" fill="#d38d5f"/><rect x="1137" y="1" width="16.2" height="16" fill="#deaa87"/><rect x="1153" y="1" width="16.2" height="16" fill="#e9c6af"/><rect x="1169" y="1" width="16.2" height="16" fill="#f4e3d7"/><rect x="1185" y="1" width="16.2" height="16" fill="#241f1c"/><rect x="1201" y="1" width="16.2" height="16" fill="#483e37"/><rect x="1217" y="1" width="16.2" height="16" fill="#6c5d53"/><rect x="1233" y="1" width="16.2" height="16" fill="#917c6f"/><rect x="1249" y="1" width="16.2" height="16" fill="#ac9d93"/><rect x="1265" y="1" width="16.2" height="16" fill="#c8beb7"/><rect x="1281" y="1" width="16.2" height="16" fill="#e3dedb"/><rect x="1297" y="1" width="16.2" height="16" fill="#2b2200"/><rect x="1313" y="1" width="16.2" height="16" fill="#554400"/><rect x="1329" y="1" width="16.2" height="16" fill="#806600"/><rect x="1345" y="1" width="16.2" height="16" fill="#aa8800"/><rect x="1361" y="1" width="16.2" height="16" fill="#d4aa00"/><rect x="1377" y="1" width="16.2" height="16" fill="#ffcc00"/><rect x="1393" y="1" width="16.2" height="16" fill="#ffd42a"/><rect x="1409" y="1" width="16.2" height="16" fill="#ffdd55"/><rect x="1425" y="1" width="16.2" height="16" fill="#ffe680"/><rect x="1441" y="1" width="16.2" height="16" fill="#ffeeaa"/><rect x="1457" y="1" width="16.2" height="16" fill="#fff6d5"/><rect x="1473" y="1" width="16.2" height="16" fill="#28240b"/><rect x="1489" y="1" width="16.2" height="16" fill="#504816"/><rect x="1505" y="1" width="16.2" height="16" fill="#786c21"/><rect x="1521" y="1" width="16.2" height="16" fill="#a0902c"/><rect x="1537" y="1" width="16.2" height="16" fill="#c8b437"/><rect x="1553" y="1" width="16.2" height="16" fill="#d3c35f"/><rect x="1569" y="1" width="16.2" height="16" fill="#ded287"/><rect x="1585" y="1" width="16.2" height="16" fill="#e9e1af"/><rect x="1601" y="1" width="5.5" height="16" fill="#f4f0d7"/></svg>
<svg style="left:1610px;top:1072.5px;" width="7" height="11" viewBox="0 0 7 11"><path d="M6.5 0.8 L0.7 5.5 L6.5 10.2 Z" fill="#999" stroke="#666" stroke-width="0.8"/></svg>
<div style="left:-1px;top:1089px;width:374px;height:12px;background:#cdcdcd;border:1px solid #afafaf;"></div>
<div class="t" style="left:2.6px;top:1102.6px;font-size:11px;color:#4a4a4a;">Fill:</div>
<div class="t" style="left:2.6px;top:1117.4px;font-size:11px;color:#4a4a4a;">Stroke:</div>
<div class="t" style="left:73.4px;top:1102.6px;font-size:11px;color:#4a4a4a;">N/A</div>
<div class="t" style="left:73.4px;top:1117.4px;font-size:11px;color:#4a4a4a;">N/A</div>
<div class="t" style="left:126.2px;top:1110.2px;font-size:11px;color:#4a4a4a;">O:</div>
<div style="left:142.3px;top:1107px;width:45px;height:21.5px;background:#d9d9d9;border-radius:3px;"></div>
<div style="left:174.8px;top:1106.5px;width:12.5px;height:22.5px;background:#cecece;border:1px solid #c0c0c0;border-radius:0 3px 3px 0;"></div>
<svg style="left:177.8px;top:1110px;" width="7" height="16" viewBox="0 0 7 16"><path d="M0.7 5.5 L3.5 0.8 L6.3 5.5 Z M0.7 10.5 L3.5 15.2 L6.3 10.5 Z" fill="none" stroke="#b0b0b0" stroke-width="0.9"/></svg>
<div class="t" style="left:146px;top:1110.3px;color:#a9a9a9;font-size:10.67px;">0</div>
<div style="left:190px;top:1104px;width:1px;height:29px;background:#d2d2d2;"></div>
<div style="left:237.6px;top:1104.3px;width:79.8px;height:27px;background:#fff;border:1px solid #cdcdcd;border-radius:3px;"></div>
<div class="t" style="left:243px;top:1110.2px;font-weight:bold;font-size:10.9px;color:#2e2e2e;letter-spacing:0.4px;">•Layer 1</div>
<svg style="left:304.3px;top:1110.5px;" width="6" height="15.4" viewBox="0 0 6 15.4"><path d="M0.4 5 L3 0.3 L5.6 5 Z M0.4 10.4 L3 15.1 L5.6 10.4 Z" fill="#777" stroke="#444" stroke-width="0.7"/></svg>
<div class="t" style="left:320.6px;top:1110px;font-size:13.25px;">No objects selected. Click, Shift+click, Alt+scroll mouse on top of objects, or drag around objects to select.</div>
<div style="left:1479px;top:1103px;width:1px;height:30px;background:#d2d2d2;"></div>
<div class="t" style="left:1482px;top:1102.4px;font-size:11px;color:#4a4a4a;">X:</div>
<div class="t" style="left:1482px;top:1118.1px;font-size:11px;color:#4a4a4a;">Y:</div>
<div class="t" style="left:1507.6px;top:1102.2px;font-family:'DejaVu Sans Mono','Liberation Mono',monospace;font-size:11.2px;color:#4a4a4a;">15.23</div>
<div class="t" style="left:1507.6px;top:1117.9px;font-family:'DejaVu Sans Mono','Liberation Mono',monospace;font-size:11.2px;color:#4a4a4a;">17.12</div>
<div class="t" style="left:1551.3px;top:1110.3px;font-size:11px;color:#4a4a4a;">Z:</div>
<div style="left:1563px;top:1106px;width:54px;height:23px;background:#fff;border:1px solid #c4c4c4;border-radius:3px;"></div>
<div style="left:1605px;top:1107px;width:1px;height:21px;background:#d6d6d6;"></div>
<div class="t" style="left:1573px;top:1109.7px;font-size:10.67px;color:#2e2e2e;">58%</div>
<svg style="left:1608.4px;top:1108.6px;" width="6" height="17" viewBox="0 0 6 17"><path d="M0.5 5.2 L3 0.6 L5.5 5.2 Z M0.5 11.6 L3 16.2 L5.5 11.6 Z" fill="#999" stroke="#666" stroke-width="0.7"/></svg>
<div style="left:1563px;top:201px;width:20px;height:1px;background:#d2d2d2;"></div>
<div style="left:1563px;top:281.5px;width:20px;height:1px;background:#d2d2d2;"></div>
<div style="left:1563px;top:361px;width:20px;height:1px;background:#d2d2d2;"></div>
<div style="left:1563px;top:475.3px;width:20px;height:1px;background:#d2d2d2;"></div>
<div style="left:1563px;top:589px;width:20px;height:1px;background:#d2d2d2;"></div>
<div style="left:1563px;top:703px;width:20px;height:1px;background:#d2d2d2;"></div>
<div style="left:1563px;top:783.3px;width:20px;height:1px;background:#d2d2d2;"></div>
<div style="left:1563px;top:965px;width:20px;height:1px;background:#d2d2d2;"></div>
<svg style="left:1565px;top:66px;" width="20" height="22.4" viewBox="0 0 20 22.4"><rect x="0.5" y="0.5" width="16.6" height="21" fill="url(#gPage)" stroke="#9a9a9a" stroke-width="1"/><path d="M13.2 11 H16.6 V14.4 H20 V17.8 H16.6 V21.2 H13.2 V17.8 H9.8 V14.4 H13.2 Z" fill="#c8d834" stroke="#8a9a10" stroke-width="0.8"/></svg>
<svg style="left:1563.2px;top:102px;" width="22" height="18" viewBox="0 0 22 18"><path d="M1 3 C1 1.6 1.6 1 3 1 H9 L10.6 3 H21 V8 H1 Z" fill="#f2f2f2" stroke="#a8a8a8" stroke-width="0.9"/><path d="M0.8 7 H21.2 L20.6 16.6 C20.6 17.2 20.2 17.4 19.6 17.4 H2.4 C1.8 17.4 1.4 17.2 1.4 16.6 Z" fill="url(#gFold)" stroke="#4a7fb5" stroke-width="0.9"/></svg>
<svg style="left:1565.4px;top:133.9px;" width="18" height="22.4" viewBox="0 0 18 22.4"><rect x="0.5" y="0.5" width="16.8" height="21.2" fill="url(#gPage)" stroke="#9a9a9a" stroke-width="1"/><defs><linearGradient id="gSv" x1="0" y1="0" x2="0" y2="1"><stop offset="0" stop-color="#6cc4f4"/><stop offset="1" stop-color="#1a6fd0"/></linearGradient></defs><path d="M6.9 6 H10.9 V11 H13.8 L8.9 16.6 L4 11 H6.9 Z" fill="url(#gSv)" stroke="#1a5fa8" stroke-width="0.7"/></svg>
<svg style="left:1563px;top:168.2px;" width="22.4" height="23.2" viewBox="0 0 22.4 23.2"><defs><linearGradient id="gPr" x1="0" y1="0" x2="0" y2="1"><stop offset="0" stop-color="#fdfdfd"/><stop offset="1" stop-color="#cfcfcf"/></linearGradient></defs><path d="M3.2 4.7 V11.4 M18.7 4.7 V11.4" stroke="#333" stroke-width="1.3"/><rect x="4.2" y="0.85" width="13.6" height="10.6" fill="#fdfdfd" stroke="#9a9a9a" stroke-width="0.9"/><path d="M10 2.3 H12 V5.2 H14.8 L11 8.6 L7.1 5.2 H10 Z" fill="#a9a9a9"/><rect x="0.5" y="11" width="21.2" height="8.4" rx="2" fill="url(#gPr)" stroke="#7a7a7a" stroke-width="0.9"/><rect x="4.2" y="11.5" width="13.6" height="5" fill="#222"/><rect x="1.6" y="18.7" width="19" height="3" rx="1.2" fill="#f6f6f6" stroke="#222" stroke-width="1.2"/><circle cx="19.3" cy="16.9" r="0.65" fill="#3c3"/></svg>
<svg style="left:1565px;top:214px;" width="20.4" height="22.4" viewBox="0 0 20.4 22.4"><rect x="0.5" y="0.5" width="16.8" height="21.2" fill="url(#gPage)" stroke="#9a9a9a" stroke-width="1"/><path d="M5.8 8.4 L12 3.6 V6.4 C17.4 6.4 20 9.6 19.4 14.6 C18.2 11.6 16 10.6 12 10.8 V13.4 Z" fill="#c05fc0" stroke="#8a2a8a" stroke-width="0.8"/></svg>
<svg style="left:1565px;top:247px;" width="21" height="22.6" viewBox="0 0 21 22.6"><rect x="0.5" y="1.2" width="16.8" height="21" fill="url(#gPage)" stroke="#9a9a9a" stroke-width="1"/><path d="M20.2 8.8 L14 3.8 V6.6 C8.6 6.6 6 10 6.6 15 C7.8 12 10 11 14 11.2 V14 Z" fill="#3f95e4" stroke="#1a5fa8" stroke-width="0.8"/></svg>
<svg style="left:1564px;top:295px;" width="19" height="18" viewBox="0 0 19 18"><path d="M0.8 7 L9.4 0.8 V4.4 C15.4 4.2 18.6 8.6 17.6 13.6 C17.2 15.4 15.6 17 13.6 17.4 C15.6 13.4 13.8 10 9.4 10.2 V13.6 Z" fill="#f7c52e" stroke="#c98a00" stroke-width="0.9"/></svg>
<svg style="left:1564.6px;top:329px;" width="19" height="18" viewBox="0 0 19 18"><path d="M18.2 7 L9.6 0.8 V4.4 C3.6 4.2 0.4 8.6 1.4 13.6 C1.8 15.4 3.4 17 5.4 17.4 C3.4 13.4 5.2 10 9.6 10.2 V13.6 Z" fill="#dfe0dc" stroke="#d2d3cf" stroke-width="0.9"/></svg>
<svg style="left:1565px;top:375px;" width="18.4" height="20.4" viewBox="0 0 18.4 20.4"><rect x="0.5" y="0.5" width="11.4" height="14.6" fill="url(#gPage)" stroke="#9a9a9a" stroke-width="1"/><rect x="6.5" y="5" width="11.4" height="14.8" fill="url(#gPage)" stroke="#9a9a9a" stroke-width="1"/><path d="M15.6 11.6 L10.6 7.4 V9.8 C6.6 9.8 4.4 12 5 15.8 C6 13.8 7.6 13.2 10.6 13.4 V15.8 Z" fill="#8fcf3a" stroke="#4a8a10" stroke-width="0.8"/></svg>
<svg style="left:1566px;top:408.5px;" width="16.4" height="22" viewBox="0 0 16.4 22"><path d="M1.4 0.6 C3 5 5.4 9.6 8.8 13.6 L7.2 15 C4.4 11 2 5.6 1.4 0.6 Z M15 0.6 C13.4 5 11 9.6 7.6 13.6 L9.2 15 C12 11 14.4 5.6 15 0.6 Z" fill="#f2f2f2" stroke="#888" stroke-width="0.8"/><ellipse cx="4.2" cy="17.6" rx="3" ry="2.8" fill="none" stroke="#c41414" stroke-width="2"/><ellipse cx="12.2" cy="17.6" rx="3" ry="2.8" fill="none" stroke="#c41414" stroke-width="2"/></svg>
<svg style="left:1565px;top:442px;" width="19" height="21.4" viewBox="0 0 19 21.4"><rect x="0.6" y="2.6" width="13.4" height="16" rx="1" fill="#d7a45a" stroke="#8a6424" stroke-width="0.9"/><rect x="4" y="0.8" width="6.6" height="3.6" rx="0.8" fill="#d8d8d8" stroke="#777" stroke-width="0.8"/><rect x="7" y="6.6" width="11.4" height="14.2" fill="url(#gPage)" stroke="#9a9a9a" stroke-width="1"/><path d="M15.8 12.4 L11 8.4 V10.7 C7.2 10.7 5.2 12.8 5.8 16.4 C6.6 14.5 8.2 14 11 14.1 V16.4 Z" fill="#8fcf3a" stroke="#4a8a10" stroke-width="0.8"/></svg>
<svg style="left:1565px;top:489.7px;" width="18.6" height="18.4" viewBox="0 0 18.6 18.4"><path d="M12.8 12.8 L17.6 17.4" stroke="#111" stroke-width="2.6" stroke-linecap="round"/><circle cx="8.4" cy="8.2" r="7.4" fill="url(#gLens)" stroke="#222" stroke-width="1.4"/><rect x="4" y="4.8" width="8.8" height="6.8" fill="#fff" stroke="#333" stroke-width="0.9" stroke-dasharray="1.3 1"/></svg>
<svg style="left:1565px;top:524px;" width="18.6" height="18.4" viewBox="0 0 18.6 18.4"><path d="M12.8 12.8 L17.6 17.4" stroke="#111" stroke-width="2.6" stroke-linecap="round"/><circle cx="8.4" cy="8.2" r="7.4" fill="url(#gLens)" stroke="#222" stroke-width="1.4"/><rect x="3.6" y="3.6" width="5.6" height="5.6" fill="#f6d45a" stroke="#6a5a10" stroke-width="0.9"/><rect x="7" y="6.8" width="5.8" height="5.8" fill="#f6d45a" stroke="#6a5a10" stroke-width="0.9"/></svg>
<svg style="left:1565px;top:558px;" width="18.6" height="18.4" viewBox="0 0 18.6 18.4"><path d="M12.8 12.8 L17.6 17.4" stroke="#111" stroke-width="2.6" stroke-linecap="round"/><circle cx="8.4" cy="8.2" r="7.4" fill="url(#gLens)" stroke="#222" stroke-width="1.4"/><rect x="4.4" y="3.6" width="8" height="9.2" fill="#fff" stroke="#444" stroke-width="1"/><path d="M5.6 13.4 H13 V4.8" stroke="#777" stroke-width="1" fill="none"/></svg>
<svg style="left:1565px;top:604px;" width="18.6" height="18.4" viewBox="0 0 18.6 18.4"><rect x="0.6" y="0.6" width="10.4" height="10" fill="url(#gBlue)" stroke="#222" stroke-width="1.1"/><rect x="4" y="3.8" width="14" height="14" fill="url(#gBlue)" stroke="#222" stroke-width="1.1"/></svg>
<svg style="left:1565px;top:638px;" width="18.6" height="18.4" viewBox="0 0 18.6 18.4"><rect x="0.6" y="0.6" width="10.4" height="10" fill="url(#gBlue)" stroke="#222" stroke-width="1.1"/><rect x="4" y="3.8" width="14" height="14" fill="url(#gBlue)" stroke="#222" stroke-width="1.1"/><path d="M8.8 10 V8.6 A2.2 2.2 0 0 1 13.2 8.6 V10" fill="none" stroke="#ddd" stroke-width="1.3"/><rect x="7.4" y="10" width="7.2" height="5.4" rx="0.6" fill="url(#gLock)" stroke="#222" stroke-width="0.8"/></svg>
<svg style="left:1565px;top:672px;" width="18.6" height="18.4" viewBox="0 0 18.6 18.4"><rect x="0.6" y="0.6" width="10.4" height="10" fill="url(#gBlue)" stroke="#222" stroke-width="1.1"/><rect x="4" y="3.8" width="14" height="14" fill="url(#gBlue)" stroke="#222" stroke-width="1.1"/><path d="M8.8 10 V8 A2.2 2.2 0 0 1 13.2 7.4" fill="none" stroke="#ddd" stroke-width="1.3"/><rect x="7.4" y="10" width="7.2" height="5.4" rx="0.6" fill="#7fcf5a" stroke="#222" stroke-width="0.8"/></svg>
<svg style="left:1565.6px;top:718.8px;" width="17.4" height="16.6" viewBox="0 0 17.4 16.6"><rect x="1.6" y="5.6" width="10.4" height="9" fill="#f6f6f6" stroke="#9a9a9a" stroke-width="1"/><circle cx="11.6" cy="5.4" r="4.6" fill="#fbfbfb" stroke="#9a9a9a" stroke-width="1"/><g fill="#333"><rect x="0" y="0.2" width="1" height="1"/><rect x="16" y="0.2" width="1" height="1"/><rect x="0" y="15.4" width="1" height="1"/><rect x="16" y="15.4" width="1" height="1"/></g></svg>
<svg style="left:1565.6px;top:752.7px;" width="17.4" height="16.6" viewBox="0 0 17.4 16.6"><rect x="1.6" y="5.6" width="10.4" height="9" fill="#f6f6f6" stroke="#9a9a9a" stroke-width="1"/><circle cx="11.6" cy="5.4" r="4.6" fill="#6f9bd6" stroke="#2a5fa8" stroke-width="1"/><g fill="#333"><rect x="0" y="4.4" width="1" height="1"/><rect x="0" y="15.4" width="1" height="1"/><rect x="12.6" y="15.4" width="1" height="1"/><rect x="6" y="0.2" width="1" height="1"/><rect x="16.2" y="0.2" width="1" height="1"/><rect x="16.2" y="10" width="1" height="1"/></g></svg>
<svg style="left:1565.8px;top:798.6px;" width="17" height="17" viewBox="0 0 17 17"><rect x="0.4" y="0.4" width="16" height="15.6" fill="#fff" stroke="#222" stroke-width="0.8"/><path d="M0 0 H16.6 V1.2 L3.4 3.2 L1.6 14.4 L0 16.4 Z" fill="#0a0a0a"/><path d="M0.6 15.8 C1.8 12.4 3.6 11 5.4 10.6 L13 3.8 L15.2 5.8 L7.6 13 C6.2 15 3.6 15.8 0.6 15.8 Z" fill="#0a0a0a"/><path d="M13 3.8 L15.8 0.8 C16.8 1.2 17.2 2.2 17 3.4 L15.2 5.8 Z" fill="#f5b800"/><path d="M5.8 11.6 L12.4 5.8" stroke="#777" stroke-width="0.7"/></svg>
<div class="t" style="left:1566.3px;top:829.8px;font-family:'Liberation Serif',serif;font-weight:bold;font-size:23.5px;line-height:23.5px;height:23.5px;color:#0c0c0c;-webkit-text-stroke:0.5px #0c0c0c;">T</div>
<svg style="left:1565.8px;top:868.4px;" width="17" height="13" viewBox="0 0 17 13"><g fill="#fff" stroke="#111" stroke-width="1.1" stroke-linejoin="round"><path d="M1 7.6 H12 L16 12 H5 Z"/><path d="M1 4.4 H12 L16 8.8 H5 Z"/><path d="M1 1.2 H12 L16 5.6 H5 Z"/></g></svg>
<svg style="left:1565.8px;top:900px;" width="17" height="17" viewBox="0 0 17 17"><rect x="0.7" y="0.7" width="15.4" height="15.4" fill="#fff" stroke="#111" stroke-width="1.3"/><rect x="1.4" y="1.4" width="14" height="2.4" fill="#b8cde6"/><line x1="0.7" y1="4.2" x2="16.1" y2="4.2" stroke="#111" stroke-width="0.9"/><path d="M6.6 7 L3 10.2 L6.6 13.4 M10.2 7 L13.8 10.2 L10.2 13.4" fill="none" stroke="#222" stroke-width="1.2"/></svg>
<svg style="left:1565.8px;top:934.3px;" width="17" height="17" viewBox="0 0 17 17"><line x1="1" y1="0.5" x2="1" y2="16.5" stroke="#d40000" stroke-width="1.2"/><rect x="3.2" y="1.8" width="4.8" height="3.4" fill="#cfe0f2" stroke="#222" stroke-width="0.9"/><rect x="3.2" y="6.8" width="12.4" height="3.4" fill="#cfe0f2" stroke="#222" stroke-width="0.9"/><rect x="3.2" y="11.8" width="8.8" height="3.4" fill="#9db8d8" stroke="#222" stroke-width="0.9"/></svg>
<svg style="left:1562.6px;top:977.2px;" width="22.4" height="22.4" viewBox="0 0 22.4 22.4"><path d="M10.16 0.65 L12.24 0.65 L13.58 3.35 L15.07 3.97 L17.92 3.01 L19.39 4.48 L18.43 7.33 L19.05 8.82 L21.75 10.16 L21.75 12.24 L19.05 13.58 L18.43 15.07 L19.39 17.92 L17.92 19.39 L15.07 18.43 L13.58 19.05 L12.24 21.75 L10.16 21.75 L8.82 19.05 L7.33 18.43 L4.48 19.39 L3.01 17.92 L3.97 15.07 L3.35 13.58 L0.65 12.24 L0.65 10.16 L3.35 8.82 L3.97 7.33 L3.01 4.48 L4.48 3.01 L7.33 3.97 L8.82 3.35 Z" fill="#e6e6e6" stroke="#b2b2b2" stroke-width="1" stroke-linejoin="round"/><circle cx="11.2" cy="11.2" r="4.4" fill="#f6f6f6" stroke="#b4b4b4" stroke-width="1"/><circle cx="11.2" cy="11.2" r="2.1" fill="#dedede" stroke="#b8b8b8" stroke-width="0.8"/></svg>
<div style="left:1562px;top:1014px;width:24px;height:19px;background:#e6e6e6;border:1px solid #b9b9b9;border-radius:2px;"></div>
<svg style="left:1566px;top:1018px;" width="16" height="11" viewBox="0 0 16 11"><rect x="0.4" y="0.4" width="6.4" height="10.2" fill="#fff" stroke="#999" stroke-width="0.8"/><rect x="0.8" y="0.8" width="5.6" height="3.6" fill="#777"/><rect x="9" y="0.4" width="6.4" height="10.2" fill="#fff" stroke="#999" stroke-width="0.8"/><rect x="9.4" y="6.6" width="5.6" height="3.6" fill="#3f8fe0"/></svg>
<svg style="left:0;top:0" width="0" height="0"><defs><linearGradient id="gPage" x1="0" y1="0" x2="1" y2="1"><stop offset="0" stop-color="#dedede"/><stop offset="1" stop-color="#fafafa"/></linearGradient><linearGradient id="gFold" x1="0" y1="0" x2="0" y2="1"><stop offset="0" stop-color="#a9cbea"/><stop offset="1" stop-color="#5f96cf"/></linearGradient></defs></svg>
<div style="left:1596px;top:93.3px;width:16px;height:1px;background:#d2d2d2;"></div>
<div style="left:1596px;top:245.3px;width:16px;height:1px;background:#d2d2d2;"></div>
<div style="left:1596px;top:425.5px;width:16px;height:1px;background:#d2d2d2;"></div>
<div style="left:1596px;top:549.3px;width:16px;height:1px;background:#d2d2d2;"></div>
<div style="left:1592px;top:61.4px;width:25.6px;height:25.3px;background:#e1e1e1;border:1px solid #c3c3c3;border-radius:3px;"></div>
<svg style="left:1596px;top:65px;" width="18" height="18" viewBox="0 0 18 18"><path d="M5 5.4 L11.4 11.6" stroke="#111" stroke-width="1.2"/><path d="M12.9 13.2 L8.2 11.9 L11.7 8.4 Z" fill="#111"/><rect x="-1.9" y="-1.9" width="3.8" height="3.8" transform="translate(3.1,3.5) rotate(45)" fill="#b8b8f4" stroke="#1a1aff" stroke-width="1.4"/><rect x="-1.9" y="-1.9" width="3.8" height="3.8" transform="translate(14.4,14.9) rotate(45)" fill="#c4c4ec" stroke="#1f8f1f" stroke-width="1.4"/></svg>
<svg style="left:1596px;top:105px;" width="18" height="18" viewBox="0 0 18 18"><path d="M5 5.4 L11.4 11.6" stroke="#111" stroke-width="1.2"/><path d="M12.9 13.2 L8.2 11.9 L11.7 8.4 Z" fill="#111"/><rect x="-1.9" y="-1.9" width="3.8" height="3.8" transform="translate(3.1,3.5) rotate(45)" fill="#b8b8f4" stroke="#1a1aff" stroke-width="1.4"/><rect x="-1.9" y="-1.9" width="3.8" height="3.8" transform="translate(14.4,14.9) rotate(45)" fill="#c4c4ec" stroke="#1f8f1f" stroke-width="1.4"/></svg>
<svg style="left:1596px;top:133px;" width="18" height="17" viewBox="0 0 18 17"><path d="M15 1 V15 H1" fill="none" stroke="#c4c4c4" stroke-width="1" stroke-dasharray="1.6 1.4"/></svg>
<svg style="left:1596px;top:161px;" width="18" height="18" viewBox="0 0 18 18"><path d="M15 1 V14 H1" fill="none" stroke="#c4c4c4" stroke-width="1" stroke-dasharray="1.6 1.4"/><circle cx="15" cy="14" r="2.2" fill="none" stroke="#c4c4c4" stroke-width="1"/></svg>
<svg style="left:1596px;top:189px;" width="18" height="16" viewBox="0 0 18 16"><path d="M14 1 V14 H1" fill="none" stroke="#c4c4c4" stroke-width="1" stroke-dasharray="1.6 1.4"/><path d="M14 2 L16 5 L14 8 L12 5 Z" fill="#c4c4c4"/></svg>
<svg style="left:1596px;top:216.8px;" width="18" height="16" viewBox="0 0 18 16"><path d="M15 1 V14 H1" fill="none" stroke="#c4c4c4" stroke-width="1" stroke-dasharray="1.6 1.4"/><circle cx="5" cy="5" r="2" fill="none" stroke="#c4c4c4" stroke-width="1"/></svg>
<div style="left:1592px;top:253.2px;width:25.6px;height:25.3px;background:#e1e1e1;border:1px solid #c3c3c3;border-radius:3px;"></div>
<svg style="left:1596px;top:257px;" width="18" height="18" viewBox="0 0 18 18"><path d="M5 5.4 L11.4 11.6" stroke="#111" stroke-width="1.2"/><path d="M12.9 13.2 L8.2 11.9 L11.7 8.4 Z" fill="#111"/><rect x="-1.9" y="-1.9" width="3.8" height="3.8" transform="translate(3.1,3.5) rotate(45)" fill="#b8b8f4" stroke="#1a1aff" stroke-width="1.4"/><rect x="-1.9" y="-1.9" width="3.8" height="3.8" transform="translate(14.4,14.9) rotate(45)" fill="#c4c4ec" stroke="#1f8f1f" stroke-width="1.4"/></svg>
<svg style="left:1596px;top:286px;" width="18" height="16.4" viewBox="0 0 18 16.4"><path d="M1 1 C8 1.4 12.4 6 11.4 14.8 C14.4 14.4 16.6 12.6 17.4 9.4" fill="none" stroke="#1a8a1a" stroke-width="1.4"/></svg>
<svg style="left:1596px;top:314px;" width="18" height="17.4" viewBox="0 0 18 17.4"><path d="M1.4 16.4 L17 0.8 M0.8 10.6 L17.2 6.6" stroke="#333" stroke-width="1"/><rect x="-2.2" y="-2.2" width="4.4" height="4.4" transform="translate(9.4,8.6) rotate(45)" fill="#9a9ad8" stroke="#1a8a1a" stroke-width="1.1"/></svg>
<div style="left:1592px;top:337.2px;width:25.6px;height:25.3px;background:#e1e1e1;border:1px solid #c3c3c3;border-radius:3px;"></div>
<svg style="left:1596px;top:341px;" width="18" height="18" viewBox="0 0 18 18"><path d="M1.2 2.4 C8 2.8 11.6 7 10.4 15.6 M10.4 15.6 C13.6 15 16 13 17 9.6" fill="none" stroke="#444" stroke-width="1.1"/><rect x="-2.2" y="-2.2" width="4.4" height="4.4" transform="translate(10.2,15) rotate(45)" fill="#9a9ad8" stroke="#1a8a1a" stroke-width="1.1"/></svg>
<svg style="left:1596px;top:369px;" width="18" height="16.4" viewBox="0 0 18 16.4"><path d="M1 1.4 C4 1 6 1.8 7.6 3.4 C11 7 8.6 13.6 11.4 15 C14 15.6 16.4 13 17 10" fill="none" stroke="#444" stroke-width="1.1"/><rect x="-2.2" y="-2.2" width="4.4" height="4.4" transform="translate(8.6,4.4) rotate(45)" fill="#9a9ad8" stroke="#1a8a1a" stroke-width="1.1"/></svg>
<svg style="left:1596px;top:397px;" width="18" height="18" viewBox="0 0 18 18"><path d="M1.2 16.6 L17 1.4" stroke="#444" stroke-width="1"/><path d="M3.4 12 L6.4 16.6 M5 10.6 L8 15.2 M11.6 4 L14.6 8.6 M13.2 2.4 L16.2 7" stroke="#d01818" stroke-width="1"/><rect x="-2.2" y="-2.2" width="4.4" height="4.4" transform="translate(9.2,9) rotate(45)" fill="#9a9ad8" stroke="#1a8a1a" stroke-width="1.1"/></svg>
<div style="left:1592px;top:433px;width:25.6px;height:25.3px;background:#e1e1e1;border:1px solid #c3c3c3;border-radius:3px;"></div>
<svg style="left:1596px;top:436.8px;" width="18" height="18" viewBox="0 0 18 18"><path d="M5 5.4 L11.4 11.6" stroke="#111" stroke-width="1.2"/><path d="M12.9 13.2 L8.2 11.9 L11.7 8.4 Z" fill="#111"/><rect x="-1.9" y="-1.9" width="3.8" height="3.8" transform="translate(3.1,3.5) rotate(45)" fill="#b8b8f4" stroke="#1a1aff" stroke-width="1.4"/><rect x="-1.9" y="-1.9" width="3.8" height="3.8" transform="translate(14.4,14.9) rotate(45)" fill="#c4c4ec" stroke="#1f8f1f" stroke-width="1.4"/></svg>
<svg style="left:1596px;top:465px;" width="18" height="16" viewBox="0 0 18 16"><path d="M15.4 0.6 V14.6 H0.8" fill="none" stroke="#999" stroke-width="1"/><circle cx="6.8" cy="6" r="1.9" fill="#d8e8d8" stroke="#1a8a1a" stroke-width="1.1"/></svg>
<svg style="left:1596px;top:493px;" width="18" height="16" viewBox="0 0 18 16"><path d="M15.6 0.6 V14.8 H1" fill="none" stroke="#222" stroke-width="1" stroke-dasharray="1.8 1.4"/><path d="M7 2.4 V10.4 M3 6.4 H11" stroke="#222" stroke-width="1.1"/></svg>
<div class="t" style="left:1600px;top:517px;font-weight:bold;font-size:21px;line-height:24px;height:24px;color:#111;-webkit-text-stroke:0.4px #111;">A</div>
<svg style="left:1595px;top:531px;" width="20" height="9" viewBox="0 0 20 9"><path d="M4 5 H18" stroke="#1a8a1a" stroke-width="1.1"/><rect x="-2.2" y="-2.2" width="4.4" height="4.4" transform="translate(3.6,5) rotate(45)" fill="#9a9ad8" stroke="#1a8a1a" stroke-width="1.1"/></svg>
<svg style="left:1598px;top:561px;" width="14" height="17.4" viewBox="0 0 14 17.4"><defs><linearGradient id="gPg" x1="0" y1="0" x2="1" y2="1"><stop offset="0" stop-color="#fff"/><stop offset="1" stop-color="#cfcfcf"/></linearGradient></defs><rect x="0.7" y="0.7" width="12.4" height="15.6" fill="url(#gPg)" stroke="#222" stroke-width="1.2"/><path d="M2 17 H14 V2" stroke="#888" stroke-width="0.9" fill="none"/></svg>
<div style="left:1592px;top:585px;width:25.6px;height:25.3px;background:#e1e1e1;border:1px solid #c3c3c3;border-radius:3px;"></div>
<svg style="left:1596.5px;top:589.5px;" width="17" height="17" viewBox="0 0 17 17"><path d="M0 3.4 H17 M0 8.5 H17 M0 13.6 H17 M3.4 0 V17 M8.5 0 V17 M13.6 0 V17" stroke="#1a1aff" stroke-width="1.5"/></svg>
<div style="left:1592px;top:613.3px;width:25.6px;height:25.3px;background:#e1e1e1;border:1px solid #c3c3c3;border-radius:3px;"></div>
<svg style="left:1596.5px;top:617.5px;" width="17" height="17" viewBox="0 0 17 17"><path d="M1.6 0.6 V16.4 M15.2 0.6 V16.4 M7 16.4 L14 0.6" stroke="#1a1aff" stroke-width="1.5" fill="none"/></svg>
<svg style="left:1345.8px;top:487.1px;" width="24" height="24" viewBox="0 0 24 24"><rect x="0.5" y="5.2" width="16.70" height="7.10" fill="url(#gBlue)" stroke="#111" stroke-width="0.9"/><rect x="10.8" y="9" width="6.40" height="7.20" fill="url(#gBlue)" stroke="#111" stroke-width="0.9"/><rect x="5.6" y="16.9" width="11.60" height="5.50" fill="url(#gBlue)" stroke="#111" stroke-width="0.9"/><line x1="17.6" y1="0" x2="17.6" y2="24" stroke="#d40000" stroke-width="0.9"/><rect x="18" y="0.4" width="5.8" height="5.4" fill="#f9d648" stroke="#111" stroke-width="0.9"/><rect x="19.2" y="1.6" width="2.8" height="2.4000000000000004" fill="#fff3b0"/></svg>
<svg style="left:1381.8px;top:487.1px;" width="24" height="24" viewBox="0 0 24 24"><rect x="3.6" y="3.2" width="10.40" height="7.20" fill="#d9dcd5" stroke="#8c8c8c" stroke-width="0.9"/><rect x="4.5" y="4.1000000000000005" width="8.60" height="5.40" fill="none" stroke="#fff" stroke-width="0.8"/><rect x="3.6" y="13.4" width="16.40" height="7.10" fill="#d9dcd5" stroke="#8c8c8c" stroke-width="0.9"/><rect x="4.5" y="14.3" width="14.60" height="5.30" fill="none" stroke="#fff" stroke-width="0.8"/><line x1="0.8" y1="1" x2="0.8" y2="22.7" stroke="#e8820c" stroke-width="1.1"/><line x1="2.6" y1="1" x2="2.6" y2="22.7" stroke="#e8820c" stroke-width="1.1"/></svg>
<svg style="left:1415.9px;top:487.1px;" width="24" height="24" viewBox="0 0 24 24"><rect x="3.5" y="3.2" width="12.50" height="7.20" fill="#d9dcd5" stroke="#8c8c8c" stroke-width="0.9"/><rect x="4.4" y="4.1000000000000005" width="10.70" height="5.40" fill="none" stroke="#fff" stroke-width="0.8"/><rect x="0.4" y="13.4" width="18.60" height="7.10" fill="#d9dcd5" stroke="#8c8c8c" stroke-width="0.9"/><rect x="1.3" y="14.3" width="16.80" height="5.30" fill="none" stroke="#fff" stroke-width="0.8"/><line x1="8.6" y1="1" x2="8.6" y2="22.7" stroke="#e8820c" stroke-width="1.1" stroke-dasharray="2 1.3"/><line x1="10.4" y1="1" x2="10.4" y2="22.7" stroke="#e8820c" stroke-width="1.1" stroke-dasharray="2 1.3"/></svg>
<svg style="left:1450px;top:487.1px;" width="24" height="24" viewBox="0 0 24 24"><rect x="6.4" y="3.2" width="10.60" height="7.20" fill="#d9dcd5" stroke="#8c8c8c" stroke-width="0.9"/><rect x="7.300000000000001" y="4.1000000000000005" width="8.80" height="5.40" fill="none" stroke="#fff" stroke-width="0.8"/><rect x="0.4" y="13.4" width="16.60" height="7.10" fill="#d9dcd5" stroke="#8c8c8c" stroke-width="0.9"/><rect x="1.3" y="14.3" width="14.80" height="5.30" fill="none" stroke="#fff" stroke-width="0.8"/><line x1="17.8" y1="1" x2="17.8" y2="22.7" stroke="#e8820c" stroke-width="1.1"/><line x1="19.6" y1="1" x2="19.6" y2="22.7" stroke="#e8820c" stroke-width="1.1"/></svg>
<svg style="left:1482.0px;top:487.1px;" width="24" height="24" viewBox="0 0 24 24"><rect x="6.8" y="5.2" width="16.80" height="7.10" fill="url(#gBlue)" stroke="#111" stroke-width="0.9"/><rect x="6.8" y="9" width="6.20" height="7.20" fill="url(#gBlue)" stroke="#111" stroke-width="0.9"/><rect x="6.8" y="16.9" width="12.00" height="5.50" fill="url(#gBlue)" stroke="#111" stroke-width="0.9"/><line x1="6.5" y1="0" x2="6.5" y2="24" stroke="#d40000" stroke-width="0.9"/><rect x="0.4" y="0.4" width="5.8" height="5.4" fill="#f9d648" stroke="#111" stroke-width="0.9"/><rect x="1.6" y="1.6" width="2.8" height="2.4000000000000004" fill="#fff3b0"/></svg>
<svg style="left:1518.3px;top:487.1px;" width="24" height="24" viewBox="0 0 24 24"><text x="5.6" y="7.2" font-family="Liberation Sans, sans-serif" font-weight="bold" font-size="12.5" fill="#1f3050">a</text><text x="0.2" y="18.2" font-family="Liberation Serif, serif" font-weight="bold" font-size="21" font-style="italic" fill="#111">y</text><line x1="4.3" y1="0" x2="4.3" y2="22" stroke="#d40000" stroke-width="0.9"/></svg>
<svg style="left:1345.8px;top:521.2px;" width="24" height="24" viewBox="0 0 24 24"><rect x="0.9" y="5.2" width="6.20" height="11.80" fill="url(#gBlue)" stroke="#111" stroke-width="0.9"/><rect x="12" y="0.5" width="6.80" height="16.50" fill="url(#gBlue)" stroke="#111" stroke-width="0.9"/><rect x="8.2" y="10.4" width="6.70" height="6.60" fill="url(#gBlue)" stroke="#111" stroke-width="0.9"/><line x1="0" y1="17.4" x2="24" y2="17.4" stroke="#d40000" stroke-width="0.9"/><rect x="18.2" y="17.9" width="5.8" height="5.4" fill="#f9d648" stroke="#111" stroke-width="0.9"/><rect x="19.4" y="19.099999999999998" width="2.8" height="2.4000000000000004" fill="#fff3b0"/></svg>
<svg style="left:1381.0px;top:521.2px;" width="24" height="24" viewBox="0 0 24 24"><rect x="2.2" y="4.9" width="7.40" height="16.40" fill="#d9dcd5" stroke="#8c8c8c" stroke-width="0.9"/><rect x="3.1" y="5.800000000000001" width="5.60" height="14.60" fill="none" stroke="#fff" stroke-width="0.8"/><rect x="12.6" y="4.9" width="7.40" height="10.30" fill="#d9dcd5" stroke="#8c8c8c" stroke-width="0.9"/><rect x="13.5" y="5.800000000000001" width="5.60" height="8.50" fill="none" stroke="#fff" stroke-width="0.8"/><line x1="0" y1="2.2" x2="22" y2="2.2" stroke="#e8820c" stroke-width="1.1"/><line x1="0" y1="4.1" x2="22" y2="4.1" stroke="#e8820c" stroke-width="1.1"/></svg>
<svg style="left:1415px;top:521.2px;" width="24" height="24" viewBox="0 0 24 24"><rect x="2.5" y="3.1" width="7.10" height="18.20" fill="#d9dcd5" stroke="#8c8c8c" stroke-width="0.9"/><rect x="3.4" y="4.0" width="5.30" height="16.40" fill="none" stroke="#fff" stroke-width="0.8"/><rect x="12.7" y="6.1" width="7.00" height="12.10" fill="#d9dcd5" stroke="#8c8c8c" stroke-width="0.9"/><rect x="13.6" y="7.0" width="5.20" height="10.30" fill="none" stroke="#fff" stroke-width="0.8"/><line x1="0" y1="11.3" x2="22" y2="11.3" stroke="#e8820c" stroke-width="1.1" stroke-dasharray="2 1.3"/><line x1="0" y1="13.1" x2="22" y2="13.1" stroke="#e8820c" stroke-width="1.1" stroke-dasharray="2 1.3"/></svg>
<svg style="left:1449.0px;top:521.2px;" width="24" height="24" viewBox="0 0 24 24"><rect x="2.3" y="2.2" width="7.40" height="16.40" fill="#d9dcd5" stroke="#8c8c8c" stroke-width="0.9"/><rect x="3.1999999999999997" y="3.1" width="5.60" height="14.60" fill="none" stroke="#fff" stroke-width="0.8"/><rect x="12.7" y="8" width="7.10" height="10.60" fill="#d9dcd5" stroke="#8c8c8c" stroke-width="0.9"/><rect x="13.6" y="8.9" width="5.30" height="8.80" fill="none" stroke="#fff" stroke-width="0.8"/><line x1="0" y1="19.3" x2="22" y2="19.3" stroke="#e8820c" stroke-width="1.1"/><line x1="0" y1="21.1" x2="22" y2="21.1" stroke="#e8820c" stroke-width="1.1"/></svg>
<svg style="left:1482.0px;top:521.2px;" width="24" height="24" viewBox="0 0 24 24"><rect x="1" y="6.8" width="5.90" height="11.60" fill="url(#gBlue)" stroke="#111" stroke-width="0.9"/><rect x="11.4" y="6.8" width="7.40" height="16.50" fill="url(#gBlue)" stroke="#111" stroke-width="0.9"/><rect x="8.4" y="6.8" width="6.90" height="6.20" fill="url(#gBlue)" stroke="#111" stroke-width="0.9"/><line x1="0" y1="6.4" x2="24" y2="6.4" stroke="#d40000" stroke-width="0.9"/><rect x="18.2" y="0.4" width="5.8" height="5.4" fill="#f9d648" stroke="#111" stroke-width="0.9"/><rect x="19.4" y="1.6" width="2.8" height="2.4000000000000004" fill="#fff3b0"/></svg>
<svg style="left:1515.7px;top:521.2px;" width="24" height="24" viewBox="0 0 24 24"><text x="2.6" y="14.4" font-family="Liberation Serif, serif" font-weight="bold" font-size="21" font-style="italic" fill="#111">y</text><text x="15.4" y="14.4" font-family="Liberation Sans, sans-serif" font-weight="bold" font-size="14" fill="#1f3050">a</text><line x1="0" y1="14.3" x2="24" y2="14.3" stroke="#d40000" stroke-width="0.9"/></svg>
<svg style="left:1380.9px;top:593.8px;" width="24" height="24" viewBox="0 0 24 24"><rect x="0.5" y="2.6" width="6.90" height="18.20" fill="#d9dcd5" stroke="#8c8c8c" stroke-width="0.9"/><rect x="1.4" y="3.5" width="5.10" height="16.40" fill="none" stroke="#fff" stroke-width="0.8"/><rect x="12.6" y="5.6" width="6.40" height="12.20" fill="#d9dcd5" stroke="#8c8c8c" stroke-width="0.9"/><rect x="13.5" y="6.5" width="4.60" height="10.40" fill="none" stroke="#fff" stroke-width="0.8"/><line x1="7.9" y1="1" x2="7.9" y2="23" stroke="#e8820c" stroke-width="1.1"/><line x1="9.6" y1="1" x2="9.6" y2="23" stroke="#e8820c" stroke-width="1.1"/><line x1="19.8" y1="1" x2="19.8" y2="23" stroke="#e8820c" stroke-width="1.1"/><line x1="21.5" y1="1" x2="21.5" y2="23" stroke="#e8820c" stroke-width="1.1"/></svg>
<svg style="left:1413.9px;top:593.8px;" width="24" height="24" viewBox="0 0 24 24"><rect x="0.5" y="7.4" width="6.00" height="9.10" fill="url(#gBlue)" stroke="#111" stroke-width="0.9"/><rect x="9.5" y="6.5" width="6.30" height="17.00" fill="url(#gBlue)" stroke="#111" stroke-width="0.9"/><rect x="19.5" y="9.5" width="4.00" height="12.20" fill="url(#gBlue)" stroke="#111" stroke-width="0.9"/><line x1="3.6" y1="0.3" x2="3.6" y2="13.6" stroke="#d40000" stroke-width="0.9"/><line x1="12.6" y1="0.3" x2="12.6" y2="13.6" stroke="#d40000" stroke-width="0.9"/><line x1="21.8" y1="0.3" x2="21.8" y2="13.6" stroke="#d40000" stroke-width="0.9"/><path d="M3.6 1.6 H12.6" stroke="#111" stroke-width="0.8"/><path d="M3.6 1.6 l2 -1.5 v3 Z M12.6 1.6 l-2 -1.5 v3 Z" fill="#111"/><path d="M12.6 1.6 H21.8" stroke="#111" stroke-width="0.8"/><path d="M12.6 1.6 l2 -1.5 v3 Z M21.8 1.6 l-2 -1.5 v3 Z" fill="#111"/></svg>
<svg style="left:1449.0px;top:593.8px;" width="24" height="24" viewBox="0 0 24 24"><rect x="2.9" y="2.6" width="6.80" height="18.20" fill="#d9dcd5" stroke="#8c8c8c" stroke-width="0.9"/><rect x="3.8" y="3.5" width="5.00" height="16.40" fill="none" stroke="#fff" stroke-width="0.8"/><rect x="15" y="5.6" width="6.80" height="12.20" fill="#d9dcd5" stroke="#8c8c8c" stroke-width="0.9"/><rect x="15.9" y="6.5" width="5.00" height="10.40" fill="none" stroke="#fff" stroke-width="0.8"/><line x1="0.7" y1="1" x2="0.7" y2="23" stroke="#e8820c" stroke-width="1.1"/><line x1="2.4" y1="1" x2="2.4" y2="23" stroke="#e8820c" stroke-width="1.1"/><line x1="12.7" y1="1" x2="12.7" y2="23" stroke="#e8820c" stroke-width="1.1"/><line x1="14.5" y1="1" x2="14.5" y2="23" stroke="#e8820c" stroke-width="1.1"/></svg>
<svg style="left:1482.0px;top:593.8px;" width="24" height="24" viewBox="0 0 24 24"><rect x="0.5" y="6.5" width="3.00" height="15.20" fill="url(#gBlue)" stroke="#111" stroke-width="0.9"/><rect x="10.4" y="8.7" width="3.20" height="9.10" fill="url(#gBlue)" stroke="#111" stroke-width="0.9"/><rect x="20.4" y="6.5" width="3.10" height="17.00" fill="url(#gBlue)" stroke="#111" stroke-width="0.9"/><line x1="3.5" y1="0.3" x2="3.5" y2="12" stroke="#d40000" stroke-width="0.9"/><line x1="10.4" y1="0.3" x2="10.4" y2="9" stroke="#d40000" stroke-width="0.9"/><line x1="13.6" y1="0.3" x2="13.6" y2="9" stroke="#d40000" stroke-width="0.9"/><line x1="20.4" y1="0.3" x2="20.4" y2="12" stroke="#d40000" stroke-width="0.9"/><path d="M3.5 1.8 H10.4" stroke="#111" stroke-width="0.8"/><path d="M3.5 1.8 l2 -1.5 v3 Z M10.4 1.8 l-2 -1.5 v3 Z" fill="#111"/><path d="M13.6 1.8 H20.4" stroke="#111" stroke-width="0.8"/><path d="M13.6 1.8 l2 -1.5 v3 Z M20.4 1.8 l-2 -1.5 v3 Z" fill="#111"/></svg>
<svg style="left:1515.7px;top:593.8px;" width="24" height="24" viewBox="0 0 24 24"><text x="1" y="17" font-family="Liberation Sans, sans-serif" font-weight="bold" font-size="14" fill="#1f3050">a</text><text x="9.2" y="18.2" font-family="Liberation Serif, serif" font-weight="bold" font-size="21" font-style="italic" fill="#111">y</text><line x1="0.6" y1="0" x2="0.6" y2="24" stroke="#d40000" stroke-width="0.9"/><line x1="14.9" y1="0" x2="14.9" y2="24" stroke="#d40000" stroke-width="0.9"/><path d="M0.6 2.6 H14.9" stroke="#111" stroke-width="0.8"/><path d="M0.6 2.6 l2 -1.5 v3 Z M14.9 2.6 l-2 -1.5 v3 Z" fill="#111"/></svg>
<svg style="left:1381.0px;top:627.9px;" width="24" height="24" viewBox="0 0 24 24"><rect x="4.4" y="4.2" width="12.30" height="6.40" fill="#d9dcd5" stroke="#8c8c8c" stroke-width="0.9"/><rect x="5.300000000000001" y="5.1000000000000005" width="10.50" height="4.60" fill="none" stroke="#fff" stroke-width="0.8"/><rect x="1.2" y="16.2" width="18.50" height="6.40" fill="#d9dcd5" stroke="#8c8c8c" stroke-width="0.9"/><rect x="2.1" y="17.099999999999998" width="16.70" height="4.60" fill="none" stroke="#fff" stroke-width="0.8"/><line x1="0" y1="1.6" x2="22" y2="1.6" stroke="#e8820c" stroke-width="1.1"/><line x1="0" y1="3.5" x2="22" y2="3.5" stroke="#e8820c" stroke-width="1.1"/><line x1="0" y1="13.5" x2="22" y2="13.5" stroke="#e8820c" stroke-width="1.1"/><line x1="0" y1="15.4" x2="22" y2="15.4" stroke="#e8820c" stroke-width="1.1"/></svg>
<svg style="left:1414.6px;top:627.9px;" width="24" height="24" viewBox="0 0 24 24"><rect x="4.8" y="2.2" width="12.50" height="8.40" fill="#d9dcd5" stroke="#8c8c8c" stroke-width="0.9"/><rect x="5.7" y="3.1" width="10.70" height="6.60" fill="none" stroke="#fff" stroke-width="0.8"/><rect x="1.7" y="14.3" width="18.40" height="8.30" fill="#d9dcd5" stroke="#8c8c8c" stroke-width="0.9"/><rect x="2.6" y="15.200000000000001" width="16.60" height="6.50" fill="none" stroke="#fff" stroke-width="0.8"/><line x1="0.4" y1="5.6" x2="22.4" y2="5.6" stroke="#e8820c" stroke-width="1.1" stroke-dasharray="2 1.3"/><line x1="0.4" y1="7.4" x2="22.4" y2="7.4" stroke="#e8820c" stroke-width="1.1" stroke-dasharray="2 1.3"/><line x1="0.4" y1="17.5" x2="22.4" y2="17.5" stroke="#e8820c" stroke-width="1.1" stroke-dasharray="2 1.3"/><line x1="0.4" y1="19.3" x2="22.4" y2="19.3" stroke="#e8820c" stroke-width="1.1" stroke-dasharray="2 1.3"/></svg>
<svg style="left:1449.0px;top:627.9px;" width="24" height="24" viewBox="0 0 24 24"><rect x="4.3" y="1.6" width="12.60" height="6.30" fill="#d9dcd5" stroke="#8c8c8c" stroke-width="0.9"/><rect x="5.2" y="2.5" width="10.80" height="4.50" fill="none" stroke="#fff" stroke-width="0.8"/><rect x="1.3" y="13.2" width="18.50" height="6.80" fill="#d9dcd5" stroke="#8c8c8c" stroke-width="0.9"/><rect x="2.2" y="14.1" width="16.70" height="5.00" fill="none" stroke="#fff" stroke-width="0.8"/><line x1="0" y1="8.7" x2="22" y2="8.7" stroke="#e8820c" stroke-width="1.1"/><line x1="0" y1="10.5" x2="22" y2="10.5" stroke="#e8820c" stroke-width="1.1"/><line x1="0" y1="20.6" x2="22" y2="20.6" stroke="#e8820c" stroke-width="1.1"/><line x1="0" y1="22.4" x2="22" y2="22.4" stroke="#e8820c" stroke-width="1.1"/></svg>
<svg style="left:1482.0px;top:627.9px;" width="24" height="24" viewBox="0 0 24 24"><rect x="6.5" y="0.5" width="17.00" height="3.00" fill="url(#gBlue)" stroke="#111" stroke-width="0.9"/><rect x="8.4" y="10.4" width="9.10" height="3.10" fill="url(#gBlue)" stroke="#111" stroke-width="0.9"/><rect x="6.5" y="20.5" width="15.20" height="3.00" fill="url(#gBlue)" stroke="#111" stroke-width="0.9"/><line x1="0" y1="3.5" x2="12" y2="3.5" stroke="#d40000" stroke-width="0.9"/><line x1="0" y1="10.4" x2="9" y2="10.4" stroke="#d40000" stroke-width="0.9"/><line x1="0" y1="13.5" x2="9" y2="13.5" stroke="#d40000" stroke-width="0.9"/><line x1="0" y1="20.5" x2="12" y2="20.5" stroke="#d40000" stroke-width="0.9"/><path d="M1.4 3.5 V10.4" stroke="#111" stroke-width="0.8"/><path d="M1.4 3.5 l-1.5 2 h3 Z M1.4 10.4 l-1.5 -2 h3 Z" fill="#111"/><path d="M1.4 13.5 V20.5" stroke="#111" stroke-width="0.8"/><path d="M1.4 13.5 l-1.5 2 h3 Z M1.4 20.5 l-1.5 -2 h3 Z" fill="#111"/></svg>
<svg style="left:1515.7px;top:627.9px;" width="24" height="24" viewBox="0 0 24 24"><text x="7.6" y="9.6" font-family="Liberation Serif, serif" font-weight="bold" font-size="21" font-style="italic" fill="#111">y</text><text x="12.8" y="23.4" font-family="Liberation Sans, sans-serif" font-weight="bold" font-size="14" fill="#1f3050">a</text><line x1="0" y1="9.6" x2="24" y2="9.6" stroke="#d40000" stroke-width="0.9"/><line x1="0" y1="23.6" x2="24" y2="23.6" stroke="#d40000" stroke-width="0.9"/><path d="M3 9.6 V23.6" stroke="#111" stroke-width="0.8"/><path d="M3 9.6 l-1.5 2 h3 Z M3 23.6 l-1.5 -2 h3 Z" fill="#111"/></svg>
<svg style="left:1349.7px;top:723.4px;" width="24" height="24" viewBox="0 0 24 24"><line x1="1.7" y1="4.5" x2="6.5" y2="1.3" stroke="#6a6a8a" stroke-width="0.8"/><line x1="6.5" y1="1.3" x2="11.7" y2="7.1" stroke="#6a6a8a" stroke-width="0.8"/><line x1="11.7" y1="7.1" x2="8.2" y2="13.6" stroke="#6a6a8a" stroke-width="0.8"/><line x1="8.2" y1="13.6" x2="2" y2="12.3" stroke="#6a6a8a" stroke-width="0.8"/><line x1="2" y1="12.3" x2="1.7" y2="4.5" stroke="#6a6a8a" stroke-width="0.8"/><line x1="11.7" y1="7.1" x2="16.9" y2="6.1" stroke="#6a6a8a" stroke-width="0.8"/><line x1="16.9" y1="6.1" x2="20.7" y2="1.7" stroke="#6a6a8a" stroke-width="0.8"/><line x1="16.9" y1="6.1" x2="20.7" y2="12" stroke="#6a6a8a" stroke-width="0.8"/><rect x="0.5999999999999999" y="3.4" width="2.2" height="2.2" fill="#cfd2ff" stroke="#7f84e8" stroke-width="0.8"/><rect x="5.4" y="0.19999999999999996" width="2.2" height="2.2" fill="#cfd2ff" stroke="#7f84e8" stroke-width="0.8"/><rect x="10.6" y="6.0" width="2.2" height="2.2" fill="#cfd2ff" stroke="#7f84e8" stroke-width="0.8"/><rect x="7.1" y="12.5" width="2.2" height="2.2" fill="#cfd2ff" stroke="#7f84e8" stroke-width="0.8"/><rect x="0.8999999999999999" y="11.200000000000001" width="2.2" height="2.2" fill="#cfd2ff" stroke="#7f84e8" stroke-width="0.8"/><rect x="15.799999999999999" y="5.0" width="2.2" height="2.2" fill="#cfd2ff" stroke="#7f84e8" stroke-width="0.8"/><rect x="19.599999999999998" y="0.5999999999999999" width="2.2" height="2.2" fill="#cfd2ff" stroke="#7f84e8" stroke-width="0.8"/><rect x="19.599999999999998" y="10.9" width="2.2" height="2.2" fill="#cfd2ff" stroke="#7f84e8" stroke-width="0.8"/></svg>
<svg style="left:1382.8px;top:723.8px;" width="24" height="24" viewBox="0 0 24 24"><rect x="0.5" y="0.5" width="10.1" height="10.1" fill="url(#gBlue)" stroke="#333" stroke-width="0.9"/><rect x="13" y="10.6" width="10" height="10" fill="url(#gBlue)" stroke="#333" stroke-width="0.9"/><path d="M10.6 3.6 C15 3.2 17.4 5 17.2 10.4 M13 17.6 C8.4 18 5.4 16 5.6 10.8" fill="none" stroke="#111" stroke-width="1.2"/><path d="M17.2 12.4 l-2 -2.6 h4 Z M5.6 8.8 l-2 2.6 h4 Z" fill="#111"/></svg>
<svg style="left:1416.8px;top:723.8px;" width="24" height="24" viewBox="0 0 24 24"><rect x="0.5" y="0.5" width="8.3" height="8.3" fill="url(#gBlue)" stroke="#333" stroke-width="0.9"/><rect x="13.7" y="7.4" width="8.3" height="8.3" fill="url(#gBlue)" stroke="#333" stroke-width="0.9"/><path d="M8.8 4.4 C14 4 17.6 4.2 17.8 7.6 M4.6 8.8 C5 11.4 8 11.4 13.7 11.4" fill="none" stroke="#111" stroke-width="1.1"/><path d="M17.8 9.2 l-1.8 -2.4 h3.6 Z M4.6 7 l-1.8 2.4 h3.6 Z" fill="#111"/><path d="M1 15.6 H8 M5.6 19.2 H12.6" stroke="#111" stroke-width="1.5"/><path d="M5 13.6 V20 M8.6 14.6 V20.6" stroke="#d40000" stroke-width="1.2"/></svg>
<svg style="left:1450.9px;top:723.8px;" width="24" height="24" viewBox="0 0 24 24"><rect x="0.5" y="0.5" width="8.3" height="8.3" fill="url(#gBlue)" stroke="#333" stroke-width="0.9"/><rect x="13.7" y="7.4" width="8.3" height="8.3" fill="url(#gBlue)" stroke="#333" stroke-width="0.9"/><path d="M8.8 4.4 C14 4 17.6 4.2 17.8 7.6 M4.6 8.8 C5 11.4 8 11.4 13.7 11.4" fill="none" stroke="#111" stroke-width="1.1"/><path d="M17.8 9.2 l-1.8 -2.4 h3.6 Z M4.6 7 l-1.8 2.4 h3.6 Z" fill="#111"/><circle cx="5.9" cy="17" r="4.4" fill="none" stroke="#d40000" stroke-width="1.1" stroke-dasharray="1.4 1.1"/><path d="M1.4 21.8 l3.4 -1 l-2.6 -2.4 Z" fill="#d40000"/></svg>
<svg style="left:1483.8px;top:723.4px;" width="24" height="24" viewBox="0 0 24 24"><rect x="0.6" y="3" width="5.80" height="4.40" fill="#f9d648" stroke="#4a4a4a" stroke-width="0.9"/><rect x="1.7000000000000002" y="4.1" width="2.80" height="1.40" fill="#ffeea0"/><rect x="11.2" y="1.3" width="6.20" height="4.30" fill="#f9d648" stroke="#4a4a4a" stroke-width="0.9"/><rect x="12.299999999999999" y="2.4000000000000004" width="3.20" height="1.30" fill="#ffeea0"/><rect x="16.5" y="7.1" width="5.20" height="4.90" fill="#f9d648" stroke="#4a4a4a" stroke-width="0.9"/><rect x="17.6" y="8.2" width="2.20" height="1.90" fill="#ffeea0"/><rect x="8.7" y="10.4" width="5.70" height="4.50" fill="#f9d648" stroke="#4a4a4a" stroke-width="0.9"/><rect x="9.799999999999999" y="11.5" width="2.70" height="1.50" fill="#ffeea0"/><rect x="0.2" y="17.5" width="6.20" height="4.50" fill="#f9d648" stroke="#4a4a4a" stroke-width="0.9"/><rect x="1.3" y="18.6" width="3.20" height="1.50" fill="#ffeea0"/><rect x="9.6" y="16.9" width="5.90" height="4.50" fill="#f9d648" stroke="#4a4a4a" stroke-width="0.9"/><rect x="10.7" y="18.0" width="2.90" height="1.50" fill="#ffeea0"/></svg>
<svg style="left:1515.8px;top:723.4px;" width="24" height="24" viewBox="0 0 24 24"><path d="M10 10.4 L18.4 5.4 V21 Z" fill="none" stroke="#c81414" stroke-width="0.9"/><rect x="0.6" y="7.1" width="9.40" height="6.80" fill="#f9d648" stroke="#4a4a4a" stroke-width="0.9"/><rect x="1.7000000000000002" y="8.2" width="6.40" height="3.80" fill="#ffeea0"/><rect x="17.5" y="2.2" width="6.50" height="6.50" fill="#f9d648" stroke="#4a4a4a" stroke-width="0.9"/><rect x="18.6" y="3.3000000000000003" width="3.50" height="3.50" fill="#ffeea0"/><rect x="17.5" y="18.1" width="6.50" height="5.30" fill="#f9d648" stroke="#4a4a4a" stroke-width="0.9"/><rect x="18.6" y="19.200000000000003" width="3.50" height="2.30" fill="#ffeea0"/></svg>
<svg style="left:1516px;top:818.1px;" width="24" height="24" viewBox="0 0 24 24"><defs><linearGradient id="gBar" x1="0" y1="0" x2="1" y2="0"><stop offset="0" stop-color="#a9c4e2"/><stop offset="0.5" stop-color="#d6e4f4"/><stop offset="1" stop-color="#8fa4bd"/></linearGradient></defs><g fill="url(#gBar)" stroke="#9aa3ad" stroke-width="0.6"><rect x="0.4" y="0.4" width="5.6" height="6.4"/><rect x="0.4" y="9.4" width="5.6" height="13.6"/><rect x="8.8" y="0.4" width="6.4" height="23"/><rect x="18.8" y="0.4" width="4.8" height="23"/></g><path d="M6.4 9.6 V23.4 M15.6 0.6 V23.4 M0 23.5 H24" stroke="#7d7d7d" stroke-width="1"/></svg>
<svg style="left:1197.8px;top:897px;" width="16" height="16" viewBox="0 0 16 16"><line x1="0.6" y1="0" x2="0.6" y2="16" stroke="#d40000" stroke-width="1.2"/><rect x="2.6" y="0.6" width="5.6" height="3.8" fill="#cfe0f2" stroke="#111" stroke-width="1"/><rect x="2.6" y="6.4" width="12.8" height="3" fill="#cfe0f2" stroke="#111" stroke-width="1"/><rect x="2.6" y="11.6" width="9.8" height="3.8" fill="#b9d0ea" stroke="#111" stroke-width="1"/></svg>
<svg style="left:1198.3px;top:923px;" width="16" height="16" viewBox="0 0 16 16"><rect x="2" y="0.6" width="11.4" height="15" fill="#f4f4f4" stroke="#a0a0a0" stroke-width="0.9"/><path d="M15.6 5.4 L11 1.6 V3.8 C7.2 3.8 5.4 6 5.8 9.6 C6.6 7.6 8.2 6.8 11 7 V9.2 Z" fill="#3f95e4" stroke="#1a5fa8" stroke-width="0.7"/></svg>
<svg style="left:1197.9px;top:949.3px;" width="16" height="16" viewBox="0 0 16 16"><rect x="0.4" y="0.4" width="15.4" height="15.2" fill="#fff" stroke="#222" stroke-width="0.8"/><path d="M0 0 H16 V1.2 L3.4 3.2 L1.6 14 L0 16 Z" fill="#0a0a0a"/><path d="M0.6 15.4 C1.8 12 3.6 10.6 5.4 10.2 L12.6 3.6 L14.8 5.6 L7.4 12.6 C6 14.6 3.6 15.4 0.6 15.4 Z" fill="#0a0a0a"/><path d="M12.6 3.6 L15.2 0.8 C16.2 1.2 16.6 2.2 16.4 3.4 L14.8 5.6 Z" fill="#f5b800"/><path d="M5.8 11.2 L12 5.6" stroke="#777" stroke-width="0.7"/></svg>
<svg style="left:1198.3px;top:976.6px;" width="16" height="12" viewBox="0 0 16 12"><g fill="#fff" stroke="#111" stroke-width="1.1" stroke-linejoin="round"><path d="M1 7.2 H11.4 L15.2 11.4 H4.8 Z"/><path d="M1 4.2 H11.4 L15.2 8.4 H4.8 Z"/><path d="M1 1.2 H11.4 L15.2 5.4 H4.8 Z"/></g></svg>
<div class="t" style="left:1197.6px;top:998px;font-family:'Liberation Serif',serif;font-weight:bold;font-size:24px;line-height:22px;height:22px;color:#0c0c0c;-webkit-text-stroke:0.5px #0c0c0c;">T</div>
<svg style="left:1198.3px;top:1026.6px;" width="18" height="18" viewBox="0 0 18 18"><rect x="0.6" y="0.6" width="8" height="8" fill="url(#gBlue)" stroke="#333" stroke-width="0.9"/><path d="M12.6 4.4 A5.4 5.4 0 1 1 4.6 10.8" fill="none" stroke="#d40000" stroke-width="1.1" stroke-dasharray="1.3 1.1"/><path d="M9.6 3.8 l3.2 -1.8 v3.6 Z" fill="#d40000"/></svg>
<svg style="left:8.2px;top:31px;" width="18" height="22" viewBox="0 0 18 22"><path d="M0.5 0.5 H12.6 L17.2 5 V21.4 H0.5 Z" fill="#eef0f2" stroke="#9c9c9c" stroke-width="1"/><path d="M2.2 3.4 H11.6 L15.4 6.4 V19.4 H2.2 Z" fill="#c3d4e8"/><path d="M12.6 0.5 V5 H17.2" fill="#fff" stroke="#b0b0b0" stroke-width="0.7"/><g stroke="#9db6d2" stroke-width="1"><path d="M3 8.4 H14.6 M3 10.4 H14.6 M3 12.4 H14.6 M3 14.4 H14.6 M3 16.4 H10 M3 18.4 H10 M8 4.6 H12 M8 6.4 H13.4"/></g><rect x="3" y="3.8" width="3.6" height="3" fill="#a9bfd8"/><path d="M10.4 15.6 H13.2 M10.4 20.2 H13.2 M11.8 15.6 V20.2" stroke="#000" stroke-width="1.3"/><rect x="9.6" y="14.8" width="4.4" height="6.2" fill="#fff" opacity="0.0"/></svg>
<svg style="left:42px;top:32.8px;" width="18" height="18.4" viewBox="0 0 18 18.4"><rect x="0.9" y="0.9" width="16.2" height="16.6" fill="none" stroke="#111" stroke-width="1.5" stroke-dasharray="2.6 1.6"/><g fill="#fff" stroke="#333" stroke-width="1" stroke-linejoin="round"><path d="M3 10.6 H11 L15 14.4 H7 Z"/><path d="M3 7.2 H11 L15 11 H7 Z"/><path d="M3 3.8 H11 L15 7.6 H7 Z"/></g></svg>
<svg style="left:76px;top:32.8px;" width="18" height="18.4" viewBox="0 0 18 18.4"><rect x="0.8" y="0.8" width="16.4" height="16.8" fill="none" stroke="#d2cccc" stroke-width="1" stroke-dasharray="2.4 1.8"/><rect x="2.8" y="7" width="9.6" height="8" fill="#e3e3e0" stroke="#d6d6d6" stroke-width="0.8"/><circle cx="10.6" cy="6.8" r="4.4" fill="#e8e8e6" stroke="#d9d9d9" stroke-width="0.8"/></svg>
<svg style="left:121.3px;top:29.9px;" width="20.4" height="24" viewBox="0 0 20.4 24"><g><path d="M9.6 4.4 C15.8 4.4 19.6 9 19.2 14 C18.8 19.4 14 22.4 9 21.6 C5.6 21 2.6 19 1.2 17 C4 18.2 7 18.6 9.6 17.6 C12.6 16.6 14 14.4 13.4 12 C12.8 10 11.4 9 9.6 9 V13 L2.8 6.6 L9.6 0.6 Z" fill="#e1e1e1" stroke="#d4d4d4" stroke-width="0.8"/><circle cx="9.4" cy="13.6" r="1.2" fill="#ececec" stroke="#d4d4d4" stroke-width="0.7"/></g></svg>
<svg style="left:154.6px;top:29.9px;" width="20.4" height="24" viewBox="0 0 20.4 24"><g transform="translate(20,0) scale(-1,1)"><path d="M9.6 4.4 C15.8 4.4 19.6 9 19.2 14 C18.8 19.4 14 22.4 9 21.6 C5.6 21 2.6 19 1.2 17 C4 18.2 7 18.6 9.6 17.6 C12.6 16.6 14 14.4 13.4 12 C12.8 10 11.4 9 9.6 9 V13 L2.8 6.6 L9.6 0.6 Z" fill="#e1e1e1" stroke="#d4d4d4" stroke-width="0.8"/><circle cx="9.4" cy="13.6" r="1.2" fill="#ececec" stroke="#d4d4d4" stroke-width="0.7"/></g></svg>
<svg style="left:188.9px;top:31px;" width="21.4" height="22" viewBox="0 0 21.4 22"><path d="M6.6 2.4 V19.4 H0.6 Z M13.6 2.4 V19.4 H20.8 Z" fill="#e1e1e1" stroke="#d4d4d4" stroke-width="0.9"/><path d="M9.4 0.4 V22 M11.4 0.4 V22" stroke="#d4d4d4" stroke-width="1" stroke-dasharray="2.4 1.6"/></svg>
<svg style="left:221.8px;top:32px;" width="22.4" height="21" viewBox="0 0 22.4 21"><path d="M2.6 7 H19.2 V1 Z M2.6 14.4 H19.2 V20.6 Z" fill="#e1e1e1" stroke="#d4d4d4" stroke-width="0.9"/><path d="M0.4 9.6 H22 M0.4 11.6 H22" stroke="#d4d4d4" stroke-width="1" stroke-dasharray="2.4 1.6"/></svg>
<svg style="left:270.2px;top:33px;" width="18" height="17.4" viewBox="0 0 18 17.4"><rect x="10.4" y="0.19999999999999996" width="7.4" height="2.1" rx="0.6" fill="#bcbcbc"/><rect x="10.4" y="3.9000000000000004" width="7.4" height="2.1" rx="0.6" fill="#bcbcbc"/><rect x="10.4" y="7.300000000000001" width="7.4" height="2.1" rx="0.6" fill="#bcbcbc"/><rect x="10.4" y="10.8" width="7.4" height="2.1" rx="0.6" fill="#bcbcbc"/><rect x="0.4" y="14.2" width="17.2" height="2.8" fill="#e4e4e4" stroke="#bcbcbc" stroke-width="0.9"/><path d="M4 0 V10.4" stroke="#bcbcbc" stroke-width="1.2"/><path d="M1.4 8.6 L4 12.6 L6.6 8.6 Z" fill="#bcbcbc"/></svg>
<svg style="left:304.2px;top:33px;" width="18" height="17.4" viewBox="0 0 18 17.4"><rect x="10.6" y="0.19999999999999996" width="7.2" height="2.1" rx="0.6" fill="#bcbcbc"/><rect x="10.6" y="7.300000000000001" width="7.2" height="2.1" rx="0.6" fill="#bcbcbc"/><rect x="10.6" y="15" width="7.2" height="2.1" rx="0.6" fill="#bcbcbc"/><rect x="7" y="3.9000000000000004" width="10.8" height="2.1" rx="0.6" fill="#bcbcbc"/><rect x="0.4" y="10.8" width="17.2" height="2.8" fill="#e4e4e4" stroke="#bcbcbc" stroke-width="0.9"/><path d="M3 3 V7.6 M3 3.6 L5 2.6" stroke="#bcbcbc" stroke-width="1.1"/><path d="M0.6 6 L3 9.4 L5.4 6 Z" fill="#bcbcbc"/></svg>
<svg style="left:338.2px;top:33px;" width="18" height="17.4" viewBox="0 0 18 17.4"><rect x="0" y="0.19999999999999996" width="7.6" height="2.1" rx="0.6" fill="#bcbcbc"/><rect x="0" y="8" width="7.6" height="2.1" rx="0.6" fill="#bcbcbc"/><rect x="0" y="14.8" width="7.6" height="2.1" rx="0.6" fill="#bcbcbc"/><rect x="0" y="11.4" width="11" height="2.1" rx="0.6" fill="#bcbcbc"/><rect x="0.4" y="3.4" width="17.2" height="2.8" fill="#e4e4e4" stroke="#bcbcbc" stroke-width="0.9"/><path d="M15 14.4 V9.6" stroke="#bcbcbc" stroke-width="1.1"/><path d="M12.6 11.4 L15 8 L17.4 11.4 Z" fill="#bcbcbc"/></svg>
<svg style="left:372.1px;top:33px;" width="18" height="17.4" viewBox="0 0 18 17.4"><rect x="0.4" y="0.4" width="17.2" height="2.4" fill="#e4e4e4" stroke="#bcbcbc" stroke-width="0.9"/><rect x="0.2" y="4.3" width="7.6" height="2.1" rx="0.6" fill="#bcbcbc"/><rect x="0.2" y="8" width="7.6" height="2.1" rx="0.6" fill="#bcbcbc"/><rect x="0.2" y="11.3" width="7.6" height="2.1" rx="0.6" fill="#bcbcbc"/><rect x="0.2" y="14.8" width="7.6" height="2.1" rx="0.6" fill="#bcbcbc"/><path d="M15.2 16.8 V6.6" stroke="#bcbcbc" stroke-width="1.2"/><path d="M12.6 8.4 L15.2 4.4 L17.8 8.4 Z" fill="#bcbcbc"/></svg>
<svg style="left:671.6px;top:35.4px;" width="11" height="13" viewBox="0 0 11 13"><defs><linearGradient id="gLk2" x1="0" y1="0" x2="1" y2="0.6"><stop offset="0" stop-color="#ffffff"/><stop offset="1" stop-color="#f0d84a"/></linearGradient></defs><path d="M2.6 2 C4 0.2 7.6 0.6 8.2 5" fill="none" stroke="#444" stroke-width="1.3"/><path d="M0.8 6.4 L9 4.8 L10 11 L1.8 12.4 Z" fill="url(#gLk2)" stroke="#333" stroke-width="1.1"/><circle cx="5.6" cy="8.4" r="1.1" fill="#222"/></svg>
<svg style="left:848.9px;top:36px;" width="13" height="13" viewBox="0 0 13 13"><path d="M0 1.2 H10.8 V6" fill="none" stroke="#000" stroke-width="2.4"/><path d="M0 4.6 H7.2 V7.2" fill="none" stroke="#000" stroke-width="1"/><path d="M2 10.2 H8.6" stroke="#111" stroke-width="1.1" stroke-dasharray="1.4 0.9"/><path d="M8.4 7.8 L12.2 10.2 L8.4 12.6 Z" fill="#111"/></svg>
<svg style="left:883px;top:36px;" width="13" height="13" viewBox="0 0 13 13"><path d="M0.4 0.8 C7 0.6 11.2 1.6 11.4 6.4" fill="none" stroke="#000" stroke-width="1.3"/><path d="M0.4 4.2 C4.6 4 7.6 4.6 7.8 7.6" fill="none" stroke="#000" stroke-width="1"/><path d="M2 10.2 H8.6" stroke="#111" stroke-width="1.1" stroke-dasharray="1.4 0.9"/><path d="M8.4 7.8 L12.2 10.2 L8.4 12.6 Z" fill="#111"/></svg>
<svg style="left:917px;top:36px;" width="13" height="13" viewBox="0 0 13 13"><defs><linearGradient id="gTb" x1="0" y1="0" x2="0" y2="1"><stop offset="0" stop-color="#111"/><stop offset="1" stop-color="#9fc2ea"/></linearGradient></defs><path d="M0 0 H12 V6 H9.6 V2.4 H0 Z" fill="#0a1a30"/><path d="M0 3 H8.6 V7.4 H0 Z" fill="url(#gTb)"/><path d="M2 10.2 H8.6" stroke="#111" stroke-width="1.1" stroke-dasharray="1.4 0.9"/><path d="M8.4 7.8 L12.2 10.2 L8.4 12.6 Z" fill="#111"/></svg>
<svg style="left:951px;top:36px;" width="13" height="13" viewBox="0 0 13 13"><path d="M0 1.2 H12" stroke="#000" stroke-width="2" /><path d="M0.4 3.8 H11.6" stroke="#000" stroke-width="1.6" stroke-dasharray="2.2 1.6"/><path d="M2 0.4 V5.6 M6 0.4 V5.6 M10 0.4 V5.6" stroke="#000" stroke-width="1.2"/><path d="M2 10.2 H8.6" stroke="#111" stroke-width="1.1" stroke-dasharray="1.4 0.9"/><path d="M8.4 7.8 L12.2 10.2 L8.4 12.6 Z" fill="#111"/></svg>
<svg style="left:196.8px;top:1111.6px;" width="12.6" height="10.4" viewBox="0 0 12.6 10.4"><path d="M0.6 6 C3 2.6 9.6 2.6 12 6 C9.6 9.6 3 9.6 0.6 6 Z" fill="#fff" stroke="#222" stroke-width="1"/><circle cx="6.4" cy="6" r="2.5" fill="#111"/><path d="M2 2.6 L3.2 4 M4.4 1 L5 3 M8 0.8 L7.6 3 M10.6 2.4 L9.6 4" stroke="#222" stroke-width="0.9"/></svg>
<svg style="left:219.6px;top:1111.6px;" width="10.4" height="12.8" viewBox="0 0 10.4 12.8"><path d="M2.4 2 C3.6 0.2 7.2 0.6 7.8 4.8" fill="none" stroke="#444" stroke-width="1.2"/><path d="M0.8 6.2 L8.6 4.8 L9.6 10.8 L1.8 12 Z" fill="url(#gLk2)" stroke="#333" stroke-width="1"/><circle cx="5.3" cy="8.2" r="1" fill="#222"/></svg>
</div></body></html>
